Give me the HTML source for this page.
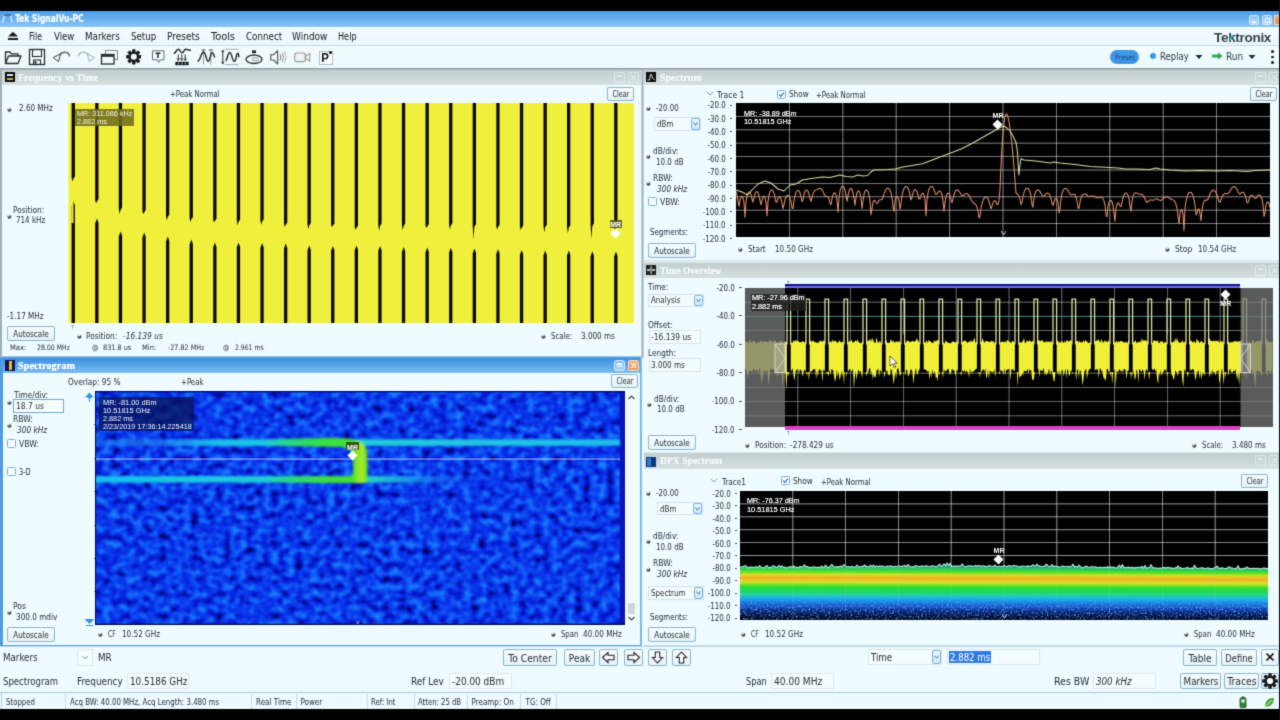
<!DOCTYPE html>
<html lang="en"><head><meta charset="utf-8"><title>Tek SignalVu-PC</title>
<style>
html,body{margin:0;padding:0;background:#000;}
body{width:1280px;height:720px;position:relative;overflow:hidden;font-family:"DejaVu Sans Condensed","Liberation Sans",sans-serif;}
.a{position:absolute;display:block;}
.t{position:absolute;white-space:nowrap;display:block;}
#app{position:absolute;left:0;top:0;width:1280px;height:720px;overflow:hidden;background:#000;filter:url(#softblur);}
</style></head>
<body><svg width="0" height="0" style="position:absolute"><defs><filter id="softblur" x="0" y="0" width="100%" height="100%" color-interpolation-filters="sRGB"><feConvolveMatrix order="3" kernelMatrix="0.04 0.19 0.04 0.19 1 0.19 0.04 0.19 0.04" divisor="1.92" edgeMode="duplicate" preserveAlpha="true"/></filter></defs></svg><div id="app">
<div class="a" style="left:0px;top:10.5px;width:1280px;height:698.5px;background:#eefbff;"></div>
<div class="a" style="left:0px;top:10.5px;width:1280px;height:16.5px;background:linear-gradient(#4f9ee9 0%,#64adef 45%,#8cc6f6 100%);"></div>
<svg class="a" style="left:2px;top:13px;" width="11" height="10" viewBox="0 0 11 10"><path d="M0.8 9.5 L2.5 2 L8.5 2 L10.2 9.5" stroke="#dfeffc" stroke-width="1.3" fill="none"/><path d="M2 2 L9 2" stroke="#2a5d9a" stroke-width="1.6"/></svg>
<span class="t" id="t1" style="top:12.25px;font-size:10.5px;line-height:13.7px;color:#f4fbff;left:15px;transform-origin:0 50%;transform:scaleX(0.8023);font-weight:bold;text-shadow:0 0 1px #cfe6fa;">Tek SignalVu-PC</span>
<div class="a" style="left:1249px;top:14.5px;width:10px;height:10px;background:linear-gradient(#8cc4f4,#b4d9f8);border:1px solid #cfe6fa;box-sizing:border-box;border-radius:2px;"><div class="a" style="left:2px;top:5px;width:4px;height:2px;background:#f4faff"></div></div>
<div class="a" style="left:1261.5px;top:14.5px;width:10px;height:10px;background:linear-gradient(#8cc4f4,#b4d9f8);border:1px solid #cfe6fa;box-sizing:border-box;border-radius:2px;"><div class="a" style="left:2px;top:2px;width:3px;height:3px;border:1px solid #f4faff"></div></div>
<div class="a" style="left:1274px;top:14.5px;width:6px;height:10px;background:linear-gradient(#f0b078,#e8904c);border:1px solid #f6d6b8;box-sizing:border-box;border-radius:2px 0 0 2px;border-right:0;"></div>
<div class="a" style="left:0px;top:27px;width:1280px;height:18.5px;background:linear-gradient(#f3fcff,#e9f7fd);"></div>
<div class="a" style="left:0px;top:45px;width:1280px;height:1px;background:#c3dbe8;"></div>
<svg class="a" style="left:7px;top:31px;" width="12" height="10" viewBox="0 0 12 10"><path d="M1 5.5 L6 0.8 L11 5.5 Z" fill="#1d1d1d"/><rect x="1" y="7" width="10" height="2" fill="#1d1d1d"/></svg>
<span class="t" id="t2" style="top:30.1px;font-size:10px;line-height:13.0px;color:#15181b;left:29px;transform-origin:0 50%;transform:scaleX(0.8667);">File</span>
<span class="t" id="t3" style="top:30.1px;font-size:10px;line-height:13.0px;color:#15181b;left:54px;transform-origin:0 50%;transform:scaleX(0.9524);">View</span>
<span class="t" id="t4" style="top:30.1px;font-size:10px;line-height:13.0px;color:#15181b;left:85px;transform-origin:0 50%;transform:scaleX(0.9722);">Markers</span>
<span class="t" id="t5" style="top:30.1px;font-size:10px;line-height:13.0px;color:#15181b;left:131px;transform-origin:0 50%;transform:scaleX(0.9615);">Setup</span>
<span class="t" id="t6" style="top:30.1px;font-size:10px;line-height:13.0px;color:#15181b;left:167px;transform-origin:0 50%;transform:scaleX(1.0000);">Presets</span>
<span class="t" id="t7" style="top:30.1px;font-size:10px;line-height:13.0px;color:#15181b;left:211px;transform-origin:0 50%;transform:scaleX(1.0909);">Tools</span>
<span class="t" id="t8" style="top:30.1px;font-size:10px;line-height:13.0px;color:#15181b;left:246px;transform-origin:0 50%;transform:scaleX(0.9730);">Connect</span>
<span class="t" id="t9" style="top:30.1px;font-size:10px;line-height:13.0px;color:#15181b;left:292px;transform-origin:0 50%;transform:scaleX(1.0000);">Window</span>
<span class="t" id="t10" style="top:30.1px;font-size:10px;line-height:13.0px;color:#15181b;left:338px;transform-origin:0 50%;transform:scaleX(0.9048);">Help</span>
<span class="t" id="t11" style="top:28.5px;font-size:13.5px;line-height:17.6px;color:#353f46;left:1214px;transform-origin:0 50%;transform:scaleX(1.0000);font-weight:bold;font-family:'Liberation Sans',sans-serif;letter-spacing:-0.3px;">Tektronix</span>
<svg class="a" style="left:1227px;top:33px;" width="9" height="9" viewBox="0 0 9 9"><path d="M2.4 7.6 L5.9 1.8" stroke="#35b6e2" stroke-width="1.5"/></svg>
<div class="a" style="left:0px;top:46px;width:1280px;height:22px;background:linear-gradient(#f2fcff,#ecf9fe);"></div>
<div class="a" style="left:0px;top:67.5px;width:1280px;height:2.2px;background:linear-gradient(#8e9a9c,#b0bcbc);"></div>
<svg class="a" style="left:4px;top:49px;" width="19" height="17" viewBox="0 0 19 17"><path d="M1.5 14.5 L1.5 3 L6 3 L7.5 4.8 L14 4.8 L14 7" stroke="#2b2b2b" stroke-width="1.3" fill="none" stroke-linejoin="round"/><path d="M1.5 14.5 L4.5 7 L17 7 L14 14.5 Z" stroke="#2b2b2b" stroke-width="1.3" fill="none" stroke-linejoin="round"/></svg>
<svg class="a" style="left:28px;top:48px;" width="19" height="19" viewBox="0 0 19 19"><rect x="1.5" y="1.5" width="15" height="15" stroke="#2b2b2b" stroke-width="1.3" fill="none"/><rect x="4.5" y="1.5" width="9" height="7" stroke="#2b2b2b" stroke-width="1.1" fill="none"/><rect x="5.5" y="12" width="7" height="4.5" stroke="#2b2b2b" stroke-width="1.1" fill="none"/><rect x="6.5" y="13.2" width="2" height="2.6" fill="#2b2b2b"/></svg>
<svg class="a" style="left:52px;top:50px;" width="20" height="14" viewBox="0 0 20 14"><path d="M17.7 6.2 C16.5 1.2 10 0.8 7 5.6" stroke="#666" stroke-width="1.5" fill="none"/><path d="M1.2 7.6 L8.6 3.8 L6.6 11.6 Z" stroke="#444" stroke-width="1" fill="#eef4f6" stroke-linejoin="round"/></svg>
<svg class="a" style="left:76px;top:50px;" width="20" height="14" viewBox="0 0 20 14"><path d="M2.3 6.2 C3.5 1.2 10 0.8 13 5.6" stroke="#b4bcc0" stroke-width="1.5" fill="none"/><path d="M18.8 7.6 L11.4 3.8 L13.4 11.6 Z" stroke="#aab2b6" stroke-width="1" fill="#eef4f6" stroke-linejoin="round"/></svg>
<svg class="a" style="left:100px;top:49px;" width="20" height="17" viewBox="0 0 20 17"><rect x="5.5" y="1.5" width="12" height="9" stroke="#888" stroke-width="1" fill="none"/><rect x="1.5" y="5.5" width="12.5" height="9.5" stroke="#2b2b2b" stroke-width="1.3" fill="#f2fcff"/><rect x="1.5" y="5.5" width="12.5" height="2.4" fill="#333"/></svg>
<svg class="a" style="left:125.8px;top:49.2px;" width="15.6" height="15.6" viewBox="0 0 17 17"><g transform="translate(8.5,8.5)"><rect x="-1.9" y="-8.3" width="3.8" height="4" rx="0.7" transform="rotate(0)" fill="#1a1a1a"/><rect x="-1.9" y="-8.3" width="3.8" height="4" rx="0.7" transform="rotate(45)" fill="#1a1a1a"/><rect x="-1.9" y="-8.3" width="3.8" height="4" rx="0.7" transform="rotate(90)" fill="#1a1a1a"/><rect x="-1.9" y="-8.3" width="3.8" height="4" rx="0.7" transform="rotate(135)" fill="#1a1a1a"/><rect x="-1.9" y="-8.3" width="3.8" height="4" rx="0.7" transform="rotate(180)" fill="#1a1a1a"/><rect x="-1.9" y="-8.3" width="3.8" height="4" rx="0.7" transform="rotate(225)" fill="#1a1a1a"/><rect x="-1.9" y="-8.3" width="3.8" height="4" rx="0.7" transform="rotate(270)" fill="#1a1a1a"/><rect x="-1.9" y="-8.3" width="3.8" height="4" rx="0.7" transform="rotate(315)" fill="#1a1a1a"/><circle r="5.7" fill="#1a1a1a"/><circle r="3.3" fill="#f2fcff"/></g></svg>
<svg class="a" style="left:151px;top:49px;" width="16" height="17" viewBox="0 0 16 17"><path d="M1.5 1.8 H13 V10.8 H9.3 L7.6 13.6 L6.6 10.8 H1.5 Z" stroke="#6a6a6a" stroke-width="1" fill="none"/><path d="M4.6 4.2 H9.4 M7 4.2 V9" stroke="#2b2b2b" stroke-width="1.5"/></svg>
<svg class="a" style="left:173px;top:48px;" width="19" height="18" viewBox="0 0 19 18"><path d="M0.8 5.6 C2.5 5.3 3.5 1.3 5.3 1.3 C7.2 1.3 7.4 5 9 5 C10.6 5 11 1.3 12.7 1.3 C14.6 1.3 15.6 2.6 18 2" stroke="#2b2b2b" stroke-width="1.5" fill="none"/><path d="M5.3 6.5 V12 M8.8 6.5 V12 M12.2 6.5 V12" stroke="#2b2b2b" stroke-width="1"/><path d="M4.1 10.5 L5.3 12.6 L6.5 10.5 M7.6 10.5 L8.8 12.6 L10 10.5 M11 10.5 L12.2 12.6 L13.4 10.5" stroke="#2b2b2b" stroke-width="0.9" fill="none"/><rect x="2.4" y="13.8" width="13.2" height="3.4" fill="#111"/><path d="M5.6 14.6 V16.4 M9 14.6 V16.4 M12.4 14.6 V16.4" stroke="#f2fcff" stroke-width="0.9"/></svg>
<svg class="a" style="left:196px;top:48px;" width="20" height="18" viewBox="0 0 20 18"><path d="M7.5 1.3 V16.6 M14.8 1.3 V16.6" stroke="#888" stroke-width="0.8"/><path d="M5.5 2 H9.5 M12.8 2 H16.8" stroke="#555" stroke-width="1.2"/><path d="M1.5 13.3 C4.5 13.3 5 4 7.5 4 C10 4 10 13.3 12.2 13.3 C14.2 13.3 14.5 4.6 16.1 4.6 C17.4 4.6 17.8 7.5 18.8 9.3" stroke="#2b2b2b" stroke-width="1.5" fill="none"/></svg>
<svg class="a" style="left:221px;top:48px;" width="19" height="18" viewBox="0 0 19 18"><path d="M3.5 1.3 H17.5 M3.5 16.6 H17.5" stroke="#999" stroke-width="0.8"/><path d="M1.8 2.5 V15.5" stroke="#2b2b2b" stroke-width="1"/><path d="M0.6 4.2 L1.8 2 L3 4.2 M0.6 13.8 L1.8 16 L3 13.8" stroke="#2b2b2b" stroke-width="0.9" fill="none"/><path d="M4.5 12.6 C6.5 12.6 6.5 4.6 8.7 4.6 C11 4.6 11 13.3 13.4 13.3 C15.4 13.3 15.2 5.3 16.7 5.3 C17.7 5.3 17.8 8 17.8 9.3" stroke="#2b2b2b" stroke-width="1.5" fill="none"/></svg>
<svg class="a" style="left:245px;top:48px;" width="19" height="18" viewBox="0 0 19 18"><ellipse cx="9" cy="11.3" rx="8" ry="4.2" stroke="#2b2b2b" stroke-width="1.3" fill="none"/><ellipse cx="10.3" cy="11.3" rx="3.2" ry="1.6" stroke="#777" stroke-width="0.8" fill="none"/><rect x="7" y="2.4" width="4" height="2.6" fill="#222"/><path d="M9 5 V8" stroke="#555" stroke-width="0.9"/></svg>
<svg class="a" style="left:269px;top:49px;" width="19" height="17" viewBox="0 0 19 17"><path d="M1.8 5.6 H4.6 L8.6 1.6 V15 L4.6 11 H1.8 Z" stroke="#5a5a5a" stroke-width="1.2" fill="#f4f8fa" stroke-linejoin="round"/><path d="M10.8 5.3 C12 6.8 12 9.8 10.8 11.3" stroke="#666" stroke-width="1" fill="none"/><path d="M12.8 3.8 C14.8 6.2 14.8 10.4 12.8 12.8" stroke="#888" stroke-width="1" fill="none"/><path d="M14.8 2.4 C17.6 5.6 17.6 11 14.8 14.2" stroke="#aaa" stroke-width="1" fill="none"/></svg>
<svg class="a" style="left:293px;top:50px;" width="19" height="15" viewBox="0 0 19 15"><rect x="1.8" y="3" width="10.4" height="8.6" rx="1.6" stroke="#999" stroke-width="1.2" fill="#f0f4f5"/><path d="M12.6 6 L16.8 3.6 V11 L12.6 8.6 Z" stroke="#999" stroke-width="1.1" fill="#f0f4f5"/></svg>
<div class="a" style="left:318.5px;top:50.5px;width:14.5px;height:14.5px;background:#fbfeff;border:1px solid #b4bec2;box-sizing:border-box;"></div>
<span class="t" id="t12" style="top:50.6px;font-size:12px;line-height:15.6px;color:#111;left:325.2px;transform-origin:50% 50%;transform:translateX(-50%) scaleX(0.9500);font-weight:bold;font-family:'Liberation Sans',sans-serif;">P</span>
<div class="a" style="left:329.4px;top:51px;width:2.8px;height:2.8px;background:#111;border-radius:2px;"></div>
<div class="a" style="left:1110px;top:50px;width:29px;height:14px;background:#3d97e6;border-radius:7px;"></div>
<span class="t" id="t13" style="top:52.6px;font-size:7.5px;line-height:9.8px;color:#1c4a7a;left:1124.5px;transform-origin:50% 50%;transform:translateX(-50%) scaleX(0.9500);">Preset</span>
<div class="a" style="left:1149.5px;top:52.5px;width:6px;height:6px;background:#3d97e6;border-radius:3px;"></div>
<span class="t" id="t14" style="top:50.45px;font-size:10.5px;line-height:13.7px;color:#2f3a42;left:1160px;transform-origin:0 50%;transform:scaleX(0.9062);">Replay</span>
<svg class="a" style="left:1195px;top:54px;" width="8" height="6" viewBox="0 0 8 6"><path d="M0.5 1 L7.5 1 L4 5 Z" fill="#222"/></svg>
<svg class="a" style="left:1212px;top:52px;" width="11" height="8" viewBox="0 0 11 8"><path d="M0 2.5 H6 V0.3 L10.5 4 L6 7.7 V5.5 H0 Z" fill="#2fae4a"/></svg>
<span class="t" id="t15" style="top:50.45px;font-size:10.5px;line-height:13.7px;color:#2f3a42;left:1226px;transform-origin:0 50%;transform:scaleX(0.9444);">Run</span>
<svg class="a" style="left:1248px;top:54px;" width="8" height="6" viewBox="0 0 8 6"><path d="M0.5 1 L7.5 1 L4 5 Z" fill="#222"/></svg>
<div class="a" style="left:1271px;top:50.0px;width:2.6px;height:2.6px;background:#1a1a1a;border-radius:2px;"></div>
<div class="a" style="left:1271px;top:55.5px;width:2.6px;height:2.6px;background:#1a1a1a;border-radius:2px;"></div>
<div class="a" style="left:1271px;top:61.0px;width:2.6px;height:2.6px;background:#1a1a1a;border-radius:2px;"></div>
<div class="a" style="left:640.5px;top:69.5px;width:3px;height:577px;background:linear-gradient(90deg,#d5e3e8,#9fb0b6 50%,#d5e3e8);"></div>
<div class="a" style="left:0px;top:69.5px;width:1.5px;height:577px;background:#9fb0b6;"></div>
<div class="a" style="left:1278.5px;top:69.5px;width:1.5px;height:577px;background:#b8cdd6;"></div>
<div class="a" style="left:1.5px;top:69.5px;width:639px;height:15.5px;background:linear-gradient(#c2cfcd 0%,#cad7d5 50%,#d5e2e1 100%);"></div>
<span class="t" id="t16" style="top:69.8px;font-size:11px;line-height:14.3px;color:#f3f9fa;left:17.8px;transform-origin:0 50%;transform:scaleX(0.8791);font-weight:bold;font-family:'Liberation Serif',serif;letter-spacing:0.1px;text-shadow:0 0 0.7px #fff;">Frequency vs Time</span>
<div class="a" style="left:614.0px;top:71.5px;width:11px;height:11px;border:1px solid rgba(232,242,242,0.7);box-sizing:border-box;border-radius:2px;"><div class="a" style="left:2px;top:2px;width:5px;height:2px;background:rgba(236,244,244,0.7)"></div></div>
<div class="a" style="left:628.0px;top:71.5px;width:11px;height:11px;border:1px solid rgba(232,242,242,0.7);box-sizing:border-box;border-radius:2px;"><svg width="9" height="9" viewBox="0 0 9 9" style="position:absolute;left:0;top:0"><path d="M2 2 L7 7 M7 2 L2 7" stroke="rgba(236,244,244,0.7)" stroke-width="1.2"/></svg></div>
<div class="a" style="left:5px;top:72px;width:10px;height:10px;background:#101010;"><div class="a" style="left:2px;top:2px;width:6px;height:2px;background:#e8e8e8"></div><div class="a" style="left:2px;top:6px;width:6px;height:1.5px;background:#b9b94a"></div></div>
<span class="t" id="t17" style="top:89.25px;font-size:8.5px;line-height:11.1px;color:#2a2f33;left:170px;transform-origin:0 50%;transform:scaleX(0.9091);">+Peak Normal</span>
<div class="a" style="left:607px;top:87px;width:27px;height:14px;background:linear-gradient(#f6fdff,#e3f1f6);border:1px solid #8fb4cc;box-sizing:border-box;border-radius:2px;"></div>
<span class="t" id="t18" style="top:89.25px;font-size:8.5px;line-height:11.1px;color:#2a2f33;left:620.5px;transform-origin:50% 50%;transform:translateX(-50%) scaleX(0.8500);">Clear</span>
<svg class="a" style="left:6px;top:105.5px;" width="7" height="7" viewBox="0 0 7 7"><circle cx="3.4" cy="3.8" r="2" fill="#4a4a4a"/><path d="M1.6 3.2 A2 2 0 0 1 4.6 2.2 L3.4 3.6 Z" fill="#e8eef0"/></svg>
<span class="t" id="t19" style="top:103.25px;font-size:8.5px;line-height:11.1px;color:#2a2f33;left:19px;transform-origin:0 50%;transform:scaleX(0.9444);">2.60 MHz</span>
<svg class="a" style="left:6px;top:213px;" width="7" height="7" viewBox="0 0 7 7"><circle cx="3.4" cy="3.8" r="2" fill="#4a4a4a"/><path d="M1.6 3.2 A2 2 0 0 1 4.6 2.2 L3.4 3.6 Z" fill="#e8eef0"/></svg>
<span class="t" id="t20" style="top:204.75px;font-size:8.5px;line-height:11.1px;color:#2a2f33;left:13px;transform-origin:0 50%;transform:scaleX(0.9688);">Position:</span>
<span class="t" id="t21" style="top:215.25px;font-size:8.5px;line-height:11.1px;color:#2a2f33;left:16px;transform-origin:0 50%;transform:scaleX(0.9355);">714 kHz</span>
<span class="t" id="t22" style="top:310.75px;font-size:8.5px;line-height:11.1px;color:#2a2f33;left:7px;transform-origin:0 50%;transform:scaleX(0.9487);">-1.17 MHz</span>
<div class="a" style="left:6.5px;top:326px;width:48px;height:14.5px;background:linear-gradient(#f6fdff,#e3f1f6);border:1px solid #8fb4cc;box-sizing:border-box;border-radius:2px;"></div>
<span class="t" id="t23" style="top:328.5px;font-size:8.5px;line-height:11.1px;color:#2a2f33;left:30.5px;transform-origin:50% 50%;transform:translateX(-50%) scaleX(0.9459);">Autoscale</span>
<svg class="a" style="left:75.5px;top:333px;" width="7" height="7" viewBox="0 0 7 7"><circle cx="3.4" cy="3.8" r="2" fill="#4a4a4a"/><path d="M1.6 3.2 A2 2 0 0 1 4.6 2.2 L3.4 3.6 Z" fill="#e8eef0"/></svg>
<span class="t" id="t24" style="top:331.25px;font-size:8.5px;line-height:11.1px;color:#2a2f33;left:86px;transform-origin:0 50%;transform:scaleX(0.9688);">Position:</span>
<span class="t" id="t25" style="top:331.25px;font-size:8.5px;line-height:11.1px;color:#2a2f33;left:123px;transform-origin:0 50%;transform:scaleX(0.9756);font-style:italic;">-16.139 us</span>
<svg class="a" style="left:540px;top:333px;" width="7" height="7" viewBox="0 0 7 7"><circle cx="3.4" cy="3.8" r="2" fill="#4a4a4a"/><path d="M1.6 3.2 A2 2 0 0 1 4.6 2.2 L3.4 3.6 Z" fill="#e8eef0"/></svg>
<span class="t" id="t26" style="top:331.25px;font-size:8.5px;line-height:11.1px;color:#2a2f33;left:551px;transform-origin:0 50%;transform:scaleX(0.9130);">Scale:</span>
<span class="t" id="t27" style="top:331.25px;font-size:8.5px;line-height:11.1px;color:#2a2f33;left:581px;transform-origin:0 50%;transform:scaleX(0.9444);">3.000 ms</span>
<span class="t" id="t28" style="top:342.9px;font-size:7.5px;line-height:9.8px;color:#2a2f33;left:10px;transform-origin:0 50%;transform:scaleX(1.0000);">Max:</span>
<span class="t" id="t29" style="top:342.9px;font-size:7.5px;line-height:9.8px;color:#2a2f33;left:37px;transform-origin:0 50%;transform:scaleX(0.9167);">28.00 MHz</span>
<span class="t" id="t30" style="top:342.9px;font-size:7.5px;line-height:9.8px;color:#2a2f33;left:92px;transform-origin:0 50%;transform:scaleX(0.9300);">@</span>
<span class="t" id="t31" style="top:342.9px;font-size:7.5px;line-height:9.8px;color:#2a2f33;left:103px;transform-origin:0 50%;transform:scaleX(0.9655);">831.8 us</span>
<span class="t" id="t32" style="top:342.9px;font-size:7.5px;line-height:9.8px;color:#2a2f33;left:142px;transform-origin:0 50%;transform:scaleX(1.0000);">Min:</span>
<span class="t" id="t33" style="top:342.9px;font-size:7.5px;line-height:9.8px;color:#2a2f33;left:168px;transform-origin:0 50%;transform:scaleX(0.9474);">-27.82 MHz</span>
<span class="t" id="t34" style="top:342.9px;font-size:7.5px;line-height:9.8px;color:#2a2f33;left:223px;transform-origin:0 50%;transform:scaleX(0.9300);">@</span>
<span class="t" id="t35" style="top:342.9px;font-size:7.5px;line-height:9.8px;color:#2a2f33;left:235px;transform-origin:0 50%;transform:scaleX(0.9062);">2.961 ms</span>
<svg class="a" style="left:68px;top:102.5px;" width="566" height="220.5" viewBox="0 0 566 220.5"><rect x="0" y="0" width="566" height="220.5" fill="#f0f03c"/><rect x="0" y="0" width="1.5" height="220.5" fill="#f3f370"/><path d="M3.6 0 H6.9 V73.5 L5.3 76.0 L4.5 78.6 L3.6 75.0 Z" fill="#0a0a00"/><path d="M3.6 220.5 H6.9 V102.5 L5.4 98.0 L3.6 103.0 Z" fill="#0a0a00"/><path d="M27.2 0 H30.5 V96.0 L28.9 98.5 L28.1 100.3 L27.2 97.5 Z" fill="#0a0a00"/><path d="M27.2 220.5 H30.5 V120.0 L29.0 115.5 L27.2 120.5 Z" fill="#0a0a00"/><path d="M50.8 0 H54.1 V104.5 L52.5 107.0 L51.7 111.3 L50.8 106.0 Z" fill="#0a0a00"/><path d="M50.8 220.5 H54.1 V133.0 L52.6 128.5 L50.8 133.5 Z" fill="#0a0a00"/><path d="M74.4 0 H77.7 V107.0 L76.1 109.5 L75.3 110.9 L74.4 108.5 Z" fill="#0a0a00"/><path d="M74.4 220.5 H77.7 V134.0 L76.2 129.5 L74.4 134.5 Z" fill="#0a0a00"/><path d="M98.0 0 H101.3 V111.5 L99.7 114.0 L98.9 117.7 L98.0 113.0 Z" fill="#0a0a00"/><path d="M98.0 220.5 H101.3 V138.0 L99.8 133.5 L98.0 138.5 Z" fill="#0a0a00"/><path d="M121.6 0 H124.9 V114.0 L123.2 116.5 L122.5 119.3 L121.6 115.5 Z" fill="#0a0a00"/><path d="M121.6 220.5 H124.9 V141.0 L123.3 136.5 L121.6 141.5 Z" fill="#0a0a00"/><path d="M145.2 0 H148.5 V115.5 L146.8 118.0 L146.1 119.3 L145.2 117.0 Z" fill="#0a0a00"/><path d="M145.2 220.5 H148.5 V144.0 L146.9 139.5 L145.2 144.5 Z" fill="#0a0a00"/><path d="M168.8 0 H172.1 V116.5 L170.4 119.0 L169.7 122.2 L168.8 118.0 Z" fill="#0a0a00"/><path d="M168.8 220.5 H172.1 V143.9 L170.5 139.4 L168.8 144.4 Z" fill="#0a0a00"/><path d="M192.4 0 H195.7 V116.2 L194.0 118.7 L193.3 121.8 L192.4 117.7 Z" fill="#0a0a00"/><path d="M192.4 220.5 H195.7 V144.5 L194.1 140.0 L192.4 145.0 Z" fill="#0a0a00"/><path d="M216.0 0 H219.3 V119.5 L217.6 122.0 L216.9 124.1 L216.0 121.0 Z" fill="#0a0a00"/><path d="M216.0 220.5 H219.3 V145.1 L217.7 140.6 L216.0 145.6 Z" fill="#0a0a00"/><path d="M239.5 0 H242.8 V119.9 L241.2 122.4 L240.4 126.3 L239.5 121.4 Z" fill="#0a0a00"/><path d="M239.5 220.5 H242.8 V146.9 L241.3 142.4 L239.5 147.4 Z" fill="#0a0a00"/><path d="M263.1 0 H266.4 V120.2 L264.8 122.7 L264.0 123.9 L263.1 121.7 Z" fill="#0a0a00"/><path d="M263.1 220.5 H266.4 V147.5 L264.9 143.0 L263.1 148.0 Z" fill="#0a0a00"/><path d="M286.7 0 H290.0 V122.6 L288.4 125.1 L287.6 126.8 L286.7 124.1 Z" fill="#0a0a00"/><path d="M286.7 220.5 H290.0 V147.1 L288.5 142.6 L286.7 147.6 Z" fill="#0a0a00"/><path d="M310.3 0 H313.6 V120.4 L312.0 122.9 L311.2 127.9 L310.3 121.9 Z" fill="#0a0a00"/><path d="M310.3 220.5 H313.6 V147.6 L312.1 143.1 L310.3 148.1 Z" fill="#0a0a00"/><path d="M333.9 0 H337.2 V120.5 L335.6 123.0 L334.8 127.2 L333.9 122.0 Z" fill="#0a0a00"/><path d="M333.9 220.5 H337.2 V148.6 L335.7 144.1 L333.9 149.1 Z" fill="#0a0a00"/><path d="M357.5 0 H360.8 V121.1 L359.2 123.6 L358.4 124.9 L357.5 122.6 Z" fill="#0a0a00"/><path d="M357.5 220.5 H360.8 V149.1 L359.3 144.6 L357.5 149.6 Z" fill="#0a0a00"/><path d="M381.1 0 H384.4 V120.2 L382.7 122.7 L382.0 127.1 L381.1 121.7 Z" fill="#0a0a00"/><path d="M381.1 220.5 H384.4 V149.2 L382.8 144.7 L381.1 149.7 Z" fill="#0a0a00"/><path d="M404.7 0 H408.0 V121.3 L406.3 123.8 L405.6 136.8 L404.7 122.8 Z" fill="#0a0a00"/><path d="M404.7 220.5 H408.0 V149.9 L406.4 145.4 L404.7 150.4 Z" fill="#0a0a00"/><path d="M428.3 0 H431.6 V121.8 L429.9 124.3 L429.2 126.8 L428.3 123.3 Z" fill="#0a0a00"/><path d="M428.3 220.5 H431.6 V150.6 L430.0 146.1 L428.3 151.1 Z" fill="#0a0a00"/><path d="M451.9 0 H455.2 V122.4 L453.5 124.9 L452.8 127.1 L451.9 123.9 Z" fill="#0a0a00"/><path d="M451.9 220.5 H455.2 V151.5 L453.6 147.0 L451.9 152.0 Z" fill="#0a0a00"/><path d="M475.5 0 H478.8 V121.7 L477.1 124.2 L476.4 129.6 L475.5 123.2 Z" fill="#0a0a00"/><path d="M475.5 220.5 H478.8 V151.9 L477.2 147.4 L475.5 152.4 Z" fill="#0a0a00"/><path d="M499.0 0 H502.3 V122.2 L500.7 124.7 L499.9 130.6 L499.0 123.7 Z" fill="#0a0a00"/><path d="M499.0 220.5 H502.3 V152.1 L500.8 147.6 L499.0 152.6 Z" fill="#0a0a00"/><path d="M522.6 0 H525.9 V120.4 L524.3 122.9 L523.5 135.9 L522.6 121.9 Z" fill="#0a0a00"/><path d="M522.6 220.5 H525.9 V152.8 L524.4 148.3 L522.6 153.3 Z" fill="#0a0a00"/><path d="M546.2 0 H549.5 V122.3 L547.9 124.8 L547.1 128.2 L546.2 123.8 Z" fill="#0a0a00"/><path d="M546.2 220.5 H549.5 V153.0 L548.0 148.5 L546.2 153.5 Z" fill="#0a0a00"/><rect x="3.5" y="80" width="2" height="40" fill="#f0f03c"/></svg>
<div class="a" style="left:75px;top:108.5px;width:58.5px;height:17.5px;background:rgba(110,108,30,0.88);"></div>
<span class="t" id="t36" style="top:108.9px;font-size:7.5px;line-height:9.8px;color:#f4f4e0;left:76.5px;transform-origin:0 50%;transform:scaleX(0.9649);font-family:'Liberation Sans',sans-serif;">MR: 311.086 kHz</span>
<span class="t" id="t37" style="top:117.4px;font-size:7.5px;line-height:9.8px;color:#f4f4e0;left:76.5px;transform-origin:0 50%;transform:scaleX(0.9677);font-family:'Liberation Sans',sans-serif;">2.882 ms</span>
<div class="a" style="left:609.5px;top:219.5px;width:12.5px;height:8px;background:rgba(90,90,40,0.9);"></div>
<span class="t" id="t38" style="top:220.25px;font-size:7px;line-height:9.1px;color:#fff;left:615.7px;transform-origin:50% 50%;transform:translateX(-50%) scaleX(1.0000);font-weight:bold;font-family:'Liberation Sans',sans-serif;">MR</span>
<svg class="a" style="left:610px;top:228px;" width="11" height="11" viewBox="0 0 11 11"><path d="M5.5 0.5 L10.5 5.5 L5.5 10.5 L0.5 5.5 Z" fill="#fff"/></svg>
<span class="t" id="t39" style="top:324.05px;font-size:5px;line-height:6.5px;color:#666;left:71px;transform-origin:0 50%;transform:scaleX(1.0000);">T</span>
<div class="a" style="left:0px;top:355.5px;width:641px;height:2.5px;background:linear-gradient(#b8d4ea,#3f92e0);"></div>
<div class="a" style="left:1.5px;top:358px;width:639px;height:14.5px;background:linear-gradient(#3b8fe0 0%,#5aa6ea 50%,#7fbdf1 100%);"></div>
<span class="t" id="t40" style="top:357.8px;font-size:11px;line-height:14.3px;color:#ffffff;left:17.8px;transform-origin:0 50%;transform:scaleX(0.9194);font-weight:bold;font-family:'Liberation Serif',serif;letter-spacing:0.1px;text-shadow:0 0 0.7px #fff;">Spectrogram</span>
<div class="a" style="left:614.0px;top:360px;width:11px;height:11px;background:linear-gradient(#7fbdf1,#a9d3f6);border:1px solid #d4e9fb;box-sizing:border-box;border-radius:2px;"><div class="a" style="left:2px;top:2px;width:5px;height:4px;border:1px solid #eef7ff;border-top-width:2px;box-sizing:border-box"></div></div>
<div class="a" style="left:628.0px;top:360px;width:11px;height:11px;background:linear-gradient(#f2b27a,#ea9450);border:1px solid #f8dcc2;box-sizing:border-box;border-radius:2px;"><svg width="9" height="9" viewBox="0 0 9 9" style="position:absolute;left:0;top:0"><path d="M2 2 L7 7 M7 2 L2 7" stroke="#fff3e6" stroke-width="1.4"/></svg></div>
<div class="a" style="left:5px;top:359.5px;width:10px;height:11px;background:#14145a;"><div class="a" style="left:3.5px;top:1px;width:3px;height:9px;background:#d6c832"></div></div>
<div class="a" style="left:0px;top:358px;width:2.5px;height:288px;background:#4f9be4;"></div>
<div class="a" style="left:0px;top:644.5px;width:642px;height:2px;background:#5aa3e8;"></div>
<div class="a" style="left:639.8px;top:357.5px;width:3.8px;height:288px;background:linear-gradient(90deg,#6eb0ea 0,#8cc2f0 58%,#eefbff 62%);"></div>
<span class="t" id="t41" style="top:377.25px;font-size:8.5px;line-height:11.1px;color:#2a2f33;left:68px;transform-origin:0 50%;transform:scaleX(0.9636);">Overlap: 95 %</span>
<span class="t" id="t42" style="top:377.25px;font-size:8.5px;line-height:11.1px;color:#2a2f33;left:181px;transform-origin:0 50%;transform:scaleX(0.9200);">+Peak</span>
<div class="a" style="left:611px;top:374px;width:27px;height:13.5px;background:linear-gradient(#f6fdff,#e3f1f6);border:1px solid #8fb4cc;box-sizing:border-box;border-radius:2px;"></div>
<span class="t" id="t43" style="top:376.0px;font-size:8.5px;line-height:11.1px;color:#2a2f33;left:624.5px;transform-origin:50% 50%;transform:translateX(-50%) scaleX(0.8500);">Clear</span>
<span class="t" id="t44" style="top:389.95px;font-size:8.5px;line-height:11.1px;color:#2a2f33;left:14px;transform-origin:0 50%;transform:scaleX(0.9714);">Time/div:</span>
<svg class="a" style="left:6px;top:399px;" width="7" height="7" viewBox="0 0 7 7"><circle cx="3.4" cy="3.8" r="2" fill="#4a4a4a"/><path d="M1.6 3.2 A2 2 0 0 1 4.6 2.2 L3.4 3.6 Z" fill="#e8eef0"/></svg>
<div class="a" style="left:13px;top:399px;width:51px;height:13.5px;background:#f6fdff;border:1px solid #6ea6cf;box-sizing:border-box;"></div>
<span class="t" id="t45" style="top:400.95px;font-size:9px;line-height:11.7px;color:#2a2f33;left:16px;transform-origin:0 50%;transform:scaleX(0.9333);">18.7 us</span>
<span class="t" id="t46" style="top:413.95px;font-size:8.5px;line-height:11.1px;color:#2a2f33;left:13px;transform-origin:0 50%;transform:scaleX(1.0000);">RBW:</span>
<svg class="a" style="left:6px;top:422px;" width="7" height="7" viewBox="0 0 7 7"><circle cx="3.4" cy="3.8" r="2" fill="#4a4a4a"/><path d="M1.6 3.2 A2 2 0 0 1 4.6 2.2 L3.4 3.6 Z" fill="#e8eef0"/></svg>
<span class="t" id="t47" style="top:425.25px;font-size:8.5px;line-height:11.1px;color:#2a2f33;left:17px;transform-origin:0 50%;transform:scaleX(0.9677);font-style:italic;">300 kHz</span>
<div class="a" style="left:7px;top:438.5px;width:9px;height:9px;background:#f4fcff;border:1px solid #7fb0cf;box-sizing:border-box;border-radius:1.5px;"></div>
<span class="t" id="t48" style="top:438.75px;font-size:8.5px;line-height:11.1px;color:#2a2f33;left:19px;transform-origin:0 50%;transform:scaleX(1.0000);">VBW:</span>
<div class="a" style="left:7px;top:467px;width:9px;height:9px;background:#f4fcff;border:1px solid #7fb0cf;box-sizing:border-box;border-radius:1.5px;"></div>
<span class="t" id="t49" style="top:467.25px;font-size:8.5px;line-height:11.1px;color:#2a2f33;left:19px;transform-origin:0 50%;transform:scaleX(0.8571);">3-D</span>
<span class="t" id="t50" style="top:600.75px;font-size:8.5px;line-height:11.1px;color:#2a2f33;left:13px;transform-origin:0 50%;transform:scaleX(1.0000);">Pos</span>
<svg class="a" style="left:6px;top:608.5px;" width="7" height="7" viewBox="0 0 7 7"><circle cx="3.4" cy="3.8" r="2" fill="#4a4a4a"/><path d="M1.6 3.2 A2 2 0 0 1 4.6 2.2 L3.4 3.6 Z" fill="#e8eef0"/></svg>
<span class="t" id="t51" style="top:611.75px;font-size:8.5px;line-height:11.1px;color:#2a2f33;left:16px;transform-origin:0 50%;transform:scaleX(0.9535);">300.0 mdiv</span>
<div class="a" style="left:6.5px;top:627px;width:48px;height:14.5px;background:linear-gradient(#f6fdff,#e3f1f6);border:1px solid #8fb4cc;box-sizing:border-box;border-radius:2px;"></div>
<span class="t" id="t52" style="top:629.5px;font-size:8.5px;line-height:11.1px;color:#2a2f33;left:30.5px;transform-origin:50% 50%;transform:translateX(-50%) scaleX(0.9459);">Autoscale</span>
<svg class="a" style="left:97px;top:631px;" width="7" height="7" viewBox="0 0 7 7"><circle cx="3.4" cy="3.8" r="2" fill="#4a4a4a"/><path d="M1.6 3.2 A2 2 0 0 1 4.6 2.2 L3.4 3.6 Z" fill="#e8eef0"/></svg>
<span class="t" id="t53" style="top:629.25px;font-size:8.5px;line-height:11.1px;color:#2a2f33;left:108px;transform-origin:0 50%;transform:scaleX(0.8000);">CF</span>
<span class="t" id="t54" style="top:629.25px;font-size:8.5px;line-height:11.1px;color:#2a2f33;left:122px;transform-origin:0 50%;transform:scaleX(0.9500);">10.52 GHz</span>
<svg class="a" style="left:550px;top:631px;" width="7" height="7" viewBox="0 0 7 7"><circle cx="3.4" cy="3.8" r="2" fill="#4a4a4a"/><path d="M1.6 3.2 A2 2 0 0 1 4.6 2.2 L3.4 3.6 Z" fill="#e8eef0"/></svg>
<span class="t" id="t55" style="top:629.25px;font-size:8.5px;line-height:11.1px;color:#2a2f33;left:561px;transform-origin:0 50%;transform:scaleX(0.8947);">Span</span>
<span class="t" id="t56" style="top:629.25px;font-size:8.5px;line-height:11.1px;color:#2a2f33;left:583px;transform-origin:0 50%;transform:scaleX(0.9512);">40.00 MHz</span>
<svg class="a" style="left:95px;top:391px;" width="530" height="234" viewBox="0 0 530 234"><defs>
<filter id="sgn" x="0" y="0" width="100%" height="100%" color-interpolation-filters="sRGB">
<feTurbulence type="fractalNoise" baseFrequency="0.125 0.14" numOctaves="2" seed="11" result="n"/>
<feColorMatrix in="n" type="matrix" values="1.55 0 0 0 -0.255  1.55 0 0 0 -0.255  1.55 0 0 0 -0.255  0 0 0 0 1" result="g"/>
<feComponentTransfer in="g">
<feFuncR type="table" tableValues="0.00 0.00 0.02 0.03 0.04 0.05 0.07 0.09 0.10"/>
<feFuncG type="table" tableValues="0.00 0.03 0.09 0.15 0.21 0.29 0.38 0.46 0.52"/>
<feFuncB type="table" tableValues="0.20 0.55 0.80 0.88 0.92 0.95 0.97 0.98 0.98"/>
</feComponentTransfer>
<feGaussianBlur stdDeviation="0.9"/>
</filter>
<linearGradient id="up" x1="0" x2="1" y1="0" y2="0"><stop offset="0" stop-color="#2a9cf4" stop-opacity="0.35"/><stop offset="0.13" stop-color="#2aa4f4" stop-opacity="0.55"/><stop offset="0.22" stop-color="#1cc0ec" stop-opacity="0.95"/><stop offset="0.3" stop-color="#1cc8e4"/><stop offset="0.52" stop-color="#22ccdc"/><stop offset="1" stop-color="#20bcf0"/></linearGradient>
<linearGradient id="lo" x1="0" x2="1" y1="0" y2="0"><stop offset="0" stop-color="#18c0f0"/><stop offset="0.3" stop-color="#1cccdc"/><stop offset="0.53" stop-color="#22d0c8"/><stop offset="0.6" stop-color="#1fa8ee" stop-opacity="0.85"/><stop offset="0.72" stop-color="#1f7af0" stop-opacity="0"/></linearGradient>
<linearGradient id="vg" gradientUnits="userSpaceOnUse" x1="140" x2="272.5" y1="0" y2="0"><stop offset="0.2" stop-color="#28dc70" stop-opacity="0"/><stop offset="0.45" stop-color="#2cde58" stop-opacity="0.75"/><stop offset="0.66" stop-color="#38e040"/><stop offset="0.89" stop-color="#48e034"/><stop offset="0.935" stop-color="#98e828"/><stop offset="0.965" stop-color="#a8ea26"/><stop offset="1" stop-color="#4ce030"/></linearGradient>
<filter id="bl"><feGaussianBlur stdDeviation="0.9"/></filter>
</defs>
<rect width="530" height="234" fill="#0a1fc0"/>
<rect width="525" height="234" filter="url(#sgn)"/>
<rect x="525" y="0" width="5" height="234" fill="#0a14b8"/>
<rect x="0" y="67.6" width="525" height="0.9" fill="#e6e0f8" opacity="0.85"/>
<g filter="url(#bl)">
<rect x="0" y="48.3" width="525" height="6.6" fill="url(#up)"/>
<rect x="0" y="85" width="525" height="6.6" fill="url(#lo)"/>
<path d="M150 48 L235 47 Q258 46.5 266 51 Q272.5 55 272.5 66 V92 H140 V85 H254 Q258 85 258 80 V68 Q258 56.5 246 56 L150 55 Z" fill="url(#vg)"/>
</g>
<rect x="0" y="0" width="530" height="1.2" fill="#000a50"/>
<rect x="0" y="232.8" width="530" height="1.2" fill="#000a50"/>
<rect x="0" y="0" width="1" height="234" fill="#000a50"/>
</svg>
<div class="a" style="left:99px;top:396.5px;width:95px;height:34px;background:rgba(8,18,80,0.72);"></div>
<span class="t" id="t57" style="top:397.7px;font-size:7.5px;line-height:9.8px;color:#f2f6ff;left:102.5px;transform-origin:0 50%;transform:scaleX(0.9818);font-family:'Liberation Sans',sans-serif;">MR: -81.00 dBm</span>
<span class="t" id="t58" style="top:405.7px;font-size:7.5px;line-height:9.8px;color:#f2f6ff;left:102.5px;transform-origin:0 50%;transform:scaleX(0.9792);font-family:'Liberation Sans',sans-serif;">10.51815 GHz</span>
<span class="t" id="t59" style="top:413.7px;font-size:7.5px;line-height:9.8px;color:#f2f6ff;left:102.5px;transform-origin:0 50%;transform:scaleX(0.9677);font-family:'Liberation Sans',sans-serif;">2.882 ms</span>
<span class="t" id="t60" style="top:421.7px;font-size:7.5px;line-height:9.8px;color:#f2f6ff;left:102.5px;transform-origin:0 50%;transform:scaleX(0.9674);font-family:'Liberation Sans',sans-serif;">2/23/2019 17:36:14.225418</span>
<div class="a" style="left:346px;top:442px;width:13px;height:8px;background:rgba(44,72,22,0.9);"></div>
<span class="t" id="t61" style="top:442.55px;font-size:7px;line-height:9.1px;color:#fff;left:352.5px;transform-origin:50% 50%;transform:translateX(-50%) scaleX(1.0000);font-weight:bold;font-family:'Liberation Sans',sans-serif;">MR</span>
<svg class="a" style="left:347px;top:449.5px;" width="11" height="11" viewBox="0 0 11 11"><path d="M5.5 0.5 L10.5 5.5 L5.5 10.5 L0.5 5.5 Z" fill="#fff"/></svg>
<span class="t" id="t62" style="top:618.4px;font-size:6px;line-height:7.8px;color:#dde;left:358px;transform-origin:50% 50%;transform:translateX(-50%) scaleX(1.0000);">v</span>
<svg class="a" style="left:84px;top:392px;" width="11" height="10" viewBox="0 0 11 10"><path d="M5.5 0.5 L10 5.5 H7 V6.5 H4 V5.5 H1 Z" fill="#3a8fe0"/><path d="M5.5 6 V10" stroke="#3a8fe0" stroke-width="1"/></svg>
<svg class="a" style="left:84px;top:617.5px;" width="11" height="8" viewBox="0 0 11 8"><path d="M0.5 1 H10.5 L5.5 6 Z" fill="#3a8fe0"/><path d="M2 7.5 H9" stroke="#3a8fe0" stroke-width="1"/></svg>
<svg class="a" style="left:626px;top:391px;" width="11" height="234" viewBox="0 0 11 234"><path d="M2.5 8 L5.5 5 L8.5 8" stroke="#444" stroke-width="1.1" fill="none"/><path d="M2.5 226 L5.5 229 L8.5 226" stroke="#444" stroke-width="1.1" fill="none"/><rect x="2" y="212" width="7" height="11" fill="#cfd6d8"/></svg>
<div class="a" style="left:93.5px;top:424.4px;width:1.5px;height:1px;background:#667;"></div>
<div class="a" style="left:93.5px;top:457.8px;width:1.5px;height:1px;background:#667;"></div>
<div class="a" style="left:93.5px;top:491.2px;width:1.5px;height:1px;background:#667;"></div>
<div class="a" style="left:93.5px;top:524.6px;width:1.5px;height:1px;background:#667;"></div>
<div class="a" style="left:93.5px;top:558.0px;width:1.5px;height:1px;background:#667;"></div>
<div class="a" style="left:93.5px;top:591.4px;width:1.5px;height:1px;background:#667;"></div>
<div class="a" style="left:643.5px;top:69.5px;width:635.0px;height:15.5px;background:linear-gradient(#c2cfcd 0%,#cad7d5 50%,#d5e2e1 100%);"></div>
<span class="t" id="t63" style="top:69.8px;font-size:11px;line-height:14.3px;color:#f3f9fa;left:659.8px;transform-origin:0 50%;transform:scaleX(0.8936);font-weight:bold;font-family:'Liberation Serif',serif;letter-spacing:0.1px;text-shadow:0 0 0.7px #fff;">Spectrum</span>
<div class="a" style="left:1254.7px;top:71.5px;width:11px;height:11px;border:1px solid rgba(232,242,242,0.7);box-sizing:border-box;border-radius:2px;"><div class="a" style="left:2px;top:2px;width:5px;height:2px;background:rgba(236,244,244,0.7)"></div></div>
<div class="a" style="left:1268.7px;top:71.5px;width:11px;height:11px;border:1px solid rgba(232,242,242,0.7);box-sizing:border-box;border-radius:2px;"><svg width="9" height="9" viewBox="0 0 9 9" style="position:absolute;left:0;top:0"><path d="M2 2 L7 7 M7 2 L2 7" stroke="rgba(236,244,244,0.7)" stroke-width="1.2"/></svg></div>
<div class="a" style="left:646px;top:72px;width:10px;height:10px;background:#101010;"><svg width="10" height="10" viewBox="0 0 10 10" style="position:absolute;left:0;top:0"><path d="M1.5 8 H3.5 L4.5 2.5 H5.5 L6.5 6 L8.5 8" stroke="#eee" stroke-width="0.9" fill="none"/></svg></div>
<svg class="a" style="left:706px;top:91px;" width="8" height="5" viewBox="0 0 8 5"><path d="M0.8 0.8 L4 4 L7.2 0.8" stroke="#8a9498" stroke-width="1" fill="none"/></svg>
<span class="t" id="t64" style="top:89.75px;font-size:8.5px;line-height:11.1px;color:#2a2f33;left:717px;transform-origin:0 50%;transform:scaleX(1.0000);">Trace 1</span>
<div class="a" style="left:777px;top:89.5px;width:9px;height:9px;background:#f4fcff;border:1px solid #7fb0cf;box-sizing:border-box;border-radius:1.5px;"><svg width="9" height="9" viewBox="0 0 9 9" style="position:absolute;left:-1px;top:-1px"><path d="M2 4.6 L3.8 6.4 L7 2.6" stroke="#2b6ea8" stroke-width="1.1" fill="none"/></svg></div>
<span class="t" id="t65" style="top:89.25px;font-size:8.5px;line-height:11.1px;color:#2a2f33;left:788.5px;transform-origin:0 50%;transform:scaleX(0.9524);">Show</span>
<span class="t" id="t66" style="top:89.75px;font-size:8.5px;line-height:11.1px;color:#2a2f33;left:816px;transform-origin:0 50%;transform:scaleX(0.9091);">+Peak Normal</span>
<div class="a" style="left:1250px;top:87px;width:27px;height:14px;background:linear-gradient(#f6fdff,#e3f1f6);border:1px solid #8fb4cc;box-sizing:border-box;border-radius:2px;"></div>
<span class="t" id="t67" style="top:89.25px;font-size:8.5px;line-height:11.1px;color:#2a2f33;left:1263.5px;transform-origin:50% 50%;transform:translateX(-50%) scaleX(0.8500);">Clear</span>
<svg class="a" style="left:645px;top:104.5px;" width="7" height="7" viewBox="0 0 7 7"><circle cx="3.4" cy="3.8" r="2" fill="#4a4a4a"/><path d="M1.6 3.2 A2 2 0 0 1 4.6 2.2 L3.4 3.6 Z" fill="#e8eef0"/></svg>
<span class="t" id="t68" style="top:102.75px;font-size:8.5px;line-height:11.1px;color:#2a2f33;left:656px;transform-origin:0 50%;transform:scaleX(0.9200);">-20.00</span>
<div class="a" style="left:654px;top:117px;width:47px;height:13.5px;background:#f2fcff;border:1px solid #d3e3ea;box-sizing:border-box;"></div>
<div class="a" style="left:691px;top:118px;width:9px;height:11.5px;background:linear-gradient(#eaf6fd,#cfe6f4);border:1px solid #7fb4d8;box-sizing:border-box;border-radius:2px;"><svg width="7" height="9.5" viewBox="0 0 7 9.5" style="position:absolute;left:0;top:0"><path d="M1.5 3.25 L3.5 6.25 L5.5 3.25" stroke="#3b7fb5" stroke-width="1" fill="none"/></svg></div>
<span class="t" id="t69" style="top:119.0px;font-size:8.5px;line-height:11.1px;color:#2a2f33;left:657px;transform-origin:0 50%;transform:scaleX(0.9300);">dBm</span>
<svg class="a" style="left:645px;top:152.5px;" width="7" height="7" viewBox="0 0 7 7"><circle cx="3.4" cy="3.8" r="2" fill="#4a4a4a"/><path d="M1.6 3.2 A2 2 0 0 1 4.6 2.2 L3.4 3.6 Z" fill="#e8eef0"/></svg>
<span class="t" id="t70" style="top:145.75px;font-size:8.5px;line-height:11.1px;color:#2a2f33;left:653px;transform-origin:0 50%;transform:scaleX(0.9615);">dB/div:</span>
<span class="t" id="t71" style="top:156.75px;font-size:8.5px;line-height:11.1px;color:#2a2f33;left:656px;transform-origin:0 50%;transform:scaleX(0.9333);">10.0 dB</span>
<svg class="a" style="left:645px;top:180px;" width="7" height="7" viewBox="0 0 7 7"><circle cx="3.4" cy="3.8" r="2" fill="#4a4a4a"/><path d="M1.6 3.2 A2 2 0 0 1 4.6 2.2 L3.4 3.6 Z" fill="#e8eef0"/></svg>
<span class="t" id="t72" style="top:172.75px;font-size:8.5px;line-height:11.1px;color:#2a2f33;left:653px;transform-origin:0 50%;transform:scaleX(1.0000);">RBW:</span>
<span class="t" id="t73" style="top:183.75px;font-size:8.5px;line-height:11.1px;color:#2a2f33;left:657px;transform-origin:0 50%;transform:scaleX(0.9677);font-style:italic;">300 kHz</span>
<div class="a" style="left:647.8px;top:196.5px;width:9px;height:9px;background:#f4fcff;border:1px solid #7fb0cf;box-sizing:border-box;border-radius:1.5px;"></div>
<span class="t" id="t74" style="top:196.75px;font-size:8.5px;line-height:11.1px;color:#2a2f33;left:660px;transform-origin:0 50%;transform:scaleX(1.0000);">VBW:</span>
<span class="t" id="t75" style="top:227.25px;font-size:8.5px;line-height:11.1px;color:#2a2f33;left:650px;transform-origin:0 50%;transform:scaleX(0.9268);">Segments:</span>
<div class="a" style="left:647.5px;top:243px;width:48px;height:14.5px;background:linear-gradient(#f6fdff,#e3f1f6);border:1px solid #8fb4cc;box-sizing:border-box;border-radius:2px;"></div>
<span class="t" id="t76" style="top:245.5px;font-size:8.5px;line-height:11.1px;color:#2a2f33;left:671.5px;transform-origin:50% 50%;transform:translateX(-50%) scaleX(0.9459);">Autoscale</span>
<svg class="a" style="left:737px;top:246px;" width="7" height="7" viewBox="0 0 7 7"><circle cx="3.4" cy="3.8" r="2" fill="#4a4a4a"/><path d="M1.6 3.2 A2 2 0 0 1 4.6 2.2 L3.4 3.6 Z" fill="#e8eef0"/></svg>
<span class="t" id="t77" style="top:244.25px;font-size:8.5px;line-height:11.1px;color:#2a2f33;left:748px;transform-origin:0 50%;transform:scaleX(0.9474);">Start</span>
<span class="t" id="t78" style="top:244.25px;font-size:8.5px;line-height:11.1px;color:#2a2f33;left:775px;transform-origin:0 50%;transform:scaleX(0.9500);">10.50 GHz</span>
<svg class="a" style="left:1164px;top:246px;" width="7" height="7" viewBox="0 0 7 7"><circle cx="3.4" cy="3.8" r="2" fill="#4a4a4a"/><path d="M1.6 3.2 A2 2 0 0 1 4.6 2.2 L3.4 3.6 Z" fill="#e8eef0"/></svg>
<span class="t" id="t79" style="top:244.25px;font-size:8.5px;line-height:11.1px;color:#2a2f33;left:1175px;transform-origin:0 50%;transform:scaleX(1.0000);">Stop</span>
<span class="t" id="t80" style="top:244.25px;font-size:8.5px;line-height:11.1px;color:#2a2f33;left:1198px;transform-origin:0 50%;transform:scaleX(0.9500);">10.54 GHz</span>
<span class="t" id="t81" style="top:100.25px;font-size:8.5px;line-height:11.1px;color:#2a2f33;right:554.5px;transform-origin:100% 50%;transform:scaleX(0.9300);">-20.0</span>
<div class="a" style="left:729.5px;top:104.5px;width:2.5px;height:1px;background:#556;"></div>
<span class="t" id="t82" style="top:113.6px;font-size:8.5px;line-height:11.1px;color:#2a2f33;right:554.5px;transform-origin:100% 50%;transform:scaleX(0.9300);">-30.0</span>
<div class="a" style="left:729.5px;top:117.85px;width:2.5px;height:1px;background:#556;"></div>
<span class="t" id="t83" style="top:126.95px;font-size:8.5px;line-height:11.1px;color:#2a2f33;right:554.5px;transform-origin:100% 50%;transform:scaleX(0.9300);">-40.0</span>
<div class="a" style="left:729.5px;top:131.2px;width:2.5px;height:1px;background:#556;"></div>
<span class="t" id="t84" style="top:140.3px;font-size:8.5px;line-height:11.1px;color:#2a2f33;right:554.5px;transform-origin:100% 50%;transform:scaleX(0.9300);">-50.0</span>
<div class="a" style="left:729.5px;top:144.55px;width:2.5px;height:1px;background:#556;"></div>
<span class="t" id="t85" style="top:153.65px;font-size:8.5px;line-height:11.1px;color:#2a2f33;right:554.5px;transform-origin:100% 50%;transform:scaleX(0.9300);">-60.0</span>
<div class="a" style="left:729.5px;top:157.9px;width:2.5px;height:1px;background:#556;"></div>
<span class="t" id="t86" style="top:167.0px;font-size:8.5px;line-height:11.1px;color:#2a2f33;right:554.5px;transform-origin:100% 50%;transform:scaleX(0.9300);">-70.0</span>
<div class="a" style="left:729.5px;top:171.25px;width:2.5px;height:1px;background:#556;"></div>
<span class="t" id="t87" style="top:180.35px;font-size:8.5px;line-height:11.1px;color:#2a2f33;right:554.5px;transform-origin:100% 50%;transform:scaleX(0.9300);">-80.0</span>
<div class="a" style="left:729.5px;top:184.6px;width:2.5px;height:1px;background:#556;"></div>
<span class="t" id="t88" style="top:193.7px;font-size:8.5px;line-height:11.1px;color:#2a2f33;right:554.5px;transform-origin:100% 50%;transform:scaleX(0.9300);">-90.0</span>
<div class="a" style="left:729.5px;top:197.95px;width:2.5px;height:1px;background:#556;"></div>
<span class="t" id="t89" style="top:207.05px;font-size:8.5px;line-height:11.1px;color:#2a2f33;right:554.5px;transform-origin:100% 50%;transform:scaleX(0.9300);">-100.0</span>
<div class="a" style="left:729.5px;top:211.3px;width:2.5px;height:1px;background:#556;"></div>
<span class="t" id="t90" style="top:220.4px;font-size:8.5px;line-height:11.1px;color:#2a2f33;right:554.5px;transform-origin:100% 50%;transform:scaleX(0.9300);">-110.0</span>
<div class="a" style="left:729.5px;top:224.64999999999998px;width:2.5px;height:1px;background:#556;"></div>
<span class="t" id="t91" style="top:233.75px;font-size:8.5px;line-height:11.1px;color:#2a2f33;right:554.5px;transform-origin:100% 50%;transform:scaleX(0.9300);">-120.0</span>
<div class="a" style="left:729.5px;top:238.0px;width:2.5px;height:1px;background:#556;"></div>
<svg class="a" style="left:736px;top:103px;" width="534" height="134" viewBox="0 0 534 134"><rect width="534" height="134" fill="#000"/><path d="M53.4 0 V134" stroke="#d4d4d4" stroke-width="0.8" opacity="0.8"/><path d="M106.8 0 V134" stroke="#d4d4d4" stroke-width="0.8" opacity="0.8"/><path d="M160.2 0 V134" stroke="#d4d4d4" stroke-width="0.8" opacity="0.8"/><path d="M213.6 0 V134" stroke="#d4d4d4" stroke-width="0.8" opacity="0.8"/><path d="M267.0 0 V134" stroke="#d4d4d4" stroke-width="0.8" opacity="0.8"/><path d="M320.4 0 V134" stroke="#d4d4d4" stroke-width="0.8" opacity="0.8"/><path d="M373.8 0 V134" stroke="#d4d4d4" stroke-width="0.8" opacity="0.8"/><path d="M427.2 0 V134" stroke="#d4d4d4" stroke-width="0.8" opacity="0.8"/><path d="M480.6 0 V134" stroke="#d4d4d4" stroke-width="0.8" opacity="0.8"/><path d="M0 13.4 H534" stroke="#d4d4d4" stroke-width="0.8" opacity="0.8"/><path d="M0 26.8 H534" stroke="#d4d4d4" stroke-width="0.8" opacity="0.8"/><path d="M0 40.2 H534" stroke="#d4d4d4" stroke-width="0.8" opacity="0.8"/><path d="M0 53.6 H534" stroke="#d4d4d4" stroke-width="0.8" opacity="0.8"/><path d="M0 67.0 H534" stroke="#d4d4d4" stroke-width="0.8" opacity="0.8"/><path d="M0 80.4 H534" stroke="#d4d4d4" stroke-width="0.8" opacity="0.8"/><path d="M0 93.8 H534" stroke="#d4d4d4" stroke-width="0.8" opacity="0.8"/><path d="M0 107.2 H534" stroke="#d4d4d4" stroke-width="0.8" opacity="0.8"/><path d="M0 120.6 H534" stroke="#d4d4d4" stroke-width="0.8" opacity="0.8"/><path d="M0.0 88.5 L1.0 91.8 L2.0 97.9 L3.0 103.4 L4.0 97.4 L5.0 93.8 L6.0 93.0 L7.0 94.6 L8.0 99.7 L9.0 114.2 L10.0 99.3 L11.0 92.9 L12.0 90.0 L13.0 89.0 L14.0 89.5 L15.0 91.8 L16.0 96.0 L17.0 99.1 L18.0 94.8 L19.0 90.9 L20.0 89.0 L21.0 88.6 L22.0 89.7 L23.0 92.6 L24.0 97.7 L25.0 101.8 L26.0 97.3 L27.0 93.9 L28.0 93.0 L29.0 94.4 L30.0 99.2 L31.0 112.9 L32.0 98.8 L33.0 92.1 L34.0 88.7 L35.0 87.2 L36.0 86.9 L37.0 87.9 L38.0 90.2 L39.0 94.1 L40.0 99.2 L41.0 99.1 L42.0 95.6 L43.0 93.8 L44.0 93.8 L45.0 95.7 L46.0 99.9 L47.0 105.7 L48.0 101.7 L49.0 96.6 L50.0 93.8 L51.0 92.6 L52.0 92.4 L53.0 93.3 L54.0 95.2 L55.0 98.7 L56.0 105.1 L57.0 105.4 L58.0 97.4 L59.0 92.5 L60.0 89.6 L61.0 87.9 L62.0 87.4 L63.0 87.9 L64.0 89.8 L65.0 93.5 L66.0 98.7 L67.0 96.8 L68.0 91.6 L69.0 88.5 L70.0 87.1 L71.0 87.0 L72.0 88.2 L73.0 90.9 L74.0 95.4 L75.0 98.5 L76.0 94.5 L77.0 90.8 L78.0 88.6 L79.0 87.5 L80.0 86.9 L81.0 86.4 L82.0 85.9 L83.0 85.5 L84.0 85.3 L85.0 85.6 L86.0 86.7 L87.0 88.4 L88.0 90.8 L89.0 92.9 L90.0 93.6 L91.0 93.4 L92.0 93.8 L93.0 95.9 L94.0 100.3 L95.0 101.6 L96.0 95.7 L97.0 91.7 L98.0 89.9 L99.0 89.8 L100.0 91.9 L101.0 97.6 L102.0 109.1 L103.0 94.2 L104.0 88.1 L105.0 85.0 L106.0 83.5 L107.0 83.3 L108.0 84.5 L109.0 87.2 L110.0 92.4 L111.0 98.4 L112.0 92.6 L113.0 88.0 L114.0 85.8 L115.0 85.4 L116.0 86.5 L117.0 89.5 L118.0 95.6 L119.0 102.3 L120.0 94.3 L121.0 89.8 L122.0 88.0 L123.0 88.1 L124.0 90.0 L125.0 94.7 L126.0 105.5 L127.0 98.3 L128.0 91.4 L129.0 88.3 L130.0 87.1 L131.0 87.2 L132.0 88.7 L133.0 91.8 L134.0 97.6 L135.0 111.9 L136.0 106.0 L137.0 99.2 L138.0 97.3 L139.0 97.7 L140.0 99.5 L141.0 100.8 L142.0 99.5 L143.0 97.6 L144.0 96.7 L145.0 96.7 L146.0 96.4 L147.0 94.2 L148.0 91.1 L149.0 88.4 L150.0 86.5 L151.0 85.4 L152.0 85.1 L153.0 85.6 L154.0 87.1 L155.0 89.7 L156.0 94.3 L157.0 103.6 L158.0 108.5 L159.0 98.1 L160.0 94.4 L161.0 93.3 L162.0 94.2 L163.0 97.7 L164.0 106.5 L165.0 101.0 L166.0 92.8 L167.0 88.3 L168.0 85.6 L169.0 84.0 L170.0 83.5 L171.0 83.8 L172.0 85.1 L173.0 87.7 L174.0 92.1 L175.0 97.0 L176.0 94.2 L177.0 89.9 L178.0 87.5 L179.0 86.6 L180.0 87.0 L181.0 88.8 L182.0 92.0 L183.0 95.9 L184.0 95.7 L185.0 92.5 L186.0 90.5 L187.0 90.2 L188.0 91.9 L189.0 96.8 L190.0 112.9 L191.0 97.2 L192.0 89.9 L193.0 86.2 L194.0 84.2 L195.0 83.4 L196.0 83.6 L197.0 84.7 L198.0 86.7 L199.0 89.5 L200.0 91.6 L201.0 91.1 L202.0 89.3 L203.0 88.1 L204.0 88.0 L205.0 89.2 L206.0 92.0 L207.0 97.6 L208.0 108.1 L209.0 99.4 L210.0 93.6 L211.0 91.0 L212.0 90.2 L213.0 90.8 L214.0 92.8 L215.0 96.6 L216.0 99.6 L217.0 96.0 L218.0 91.8 L219.0 89.1 L220.0 87.6 L221.0 87.0 L222.0 87.2 L223.0 88.2 L224.0 89.7 L225.0 91.5 L226.0 92.7 L227.0 92.7 L228.0 91.8 L229.0 90.9 L230.0 90.5 L231.0 90.6 L232.0 91.3 L233.0 92.6 L234.0 94.3 L235.0 96.3 L236.0 98.2 L237.0 99.5 L238.0 100.3 L239.0 101.0 L240.0 102.1 L241.0 104.2 L242.0 108.0 L243.0 115.0 L244.0 113.1 L245.0 105.3 L246.0 100.5 L247.0 97.4 L248.0 95.4 L249.0 94.3 L250.0 93.9 L251.0 94.4 L252.0 95.8 L253.0 98.3 L254.0 102.3 L255.0 105.7 L256.0 103.1 L257.0 99.7 L258.0 97.9 L259.0 97.6 L260.0 98.8 L261.0 101.2 L262.0 101.7 L263.0 97.8 L264.0 85.8 L265.0 62.7 L266.0 44.1 L267.0 30.0 L268.0 19.9 L269.0 13.7 L270.0 11.0 L271.0 11.3 L272.0 14.2 L273.0 19.0 L274.0 25.4 L275.0 33.2 L276.0 42.3 L277.0 52.7 L278.0 64.3 L279.0 77.0 L280.0 90.1 L281.0 90.4 L282.0 91.3 L283.0 93.2 L284.0 96.6 L285.0 101.4 L286.0 99.4 L287.0 93.5 L288.0 89.6 L289.0 87.1 L290.0 85.6 L291.0 85.1 L292.0 85.4 L293.0 86.6 L294.0 89.0 L295.0 93.2 L296.0 101.8 L297.0 104.3 L298.0 94.9 L299.0 90.6 L300.0 88.3 L301.0 87.2 L302.0 87.0 L303.0 87.5 L304.0 88.6 L305.0 90.2 L306.0 92.0 L307.0 93.4 L308.0 93.3 L309.0 92.1 L310.0 90.9 L311.0 90.2 L312.0 90.1 L313.0 90.9 L314.0 92.7 L315.0 95.8 L316.0 100.3 L317.0 102.4 L318.0 98.9 L319.0 96.0 L320.0 95.0 L321.0 95.8 L322.0 99.2 L323.0 110.0 L324.0 105.8 L325.0 95.5 L326.0 90.6 L327.0 87.7 L328.0 86.1 L329.0 85.4 L330.0 85.5 L331.0 86.2 L332.0 87.7 L333.0 89.5 L334.0 91.2 L335.0 91.9 L336.0 91.6 L337.0 91.2 L338.0 91.2 L339.0 92.1 L340.0 94.2 L341.0 98.1 L342.0 104.7 L343.0 105.5 L344.0 98.8 L345.0 94.8 L346.0 92.5 L347.0 91.3 L348.0 90.9 L349.0 91.0 L350.0 91.5 L351.0 92.3 L352.0 93.0 L353.0 93.4 L354.0 93.5 L355.0 93.3 L356.0 93.1 L357.0 93.0 L358.0 93.2 L359.0 93.7 L360.0 94.3 L361.0 94.8 L362.0 94.9 L363.0 94.6 L364.0 94.2 L365.0 94.1 L366.0 94.4 L367.0 95.6 L368.0 97.9 L369.0 102.2 L370.0 112.0 L371.0 113.8 L372.0 103.4 L373.0 99.3 L374.0 97.5 L375.0 97.4 L376.0 98.9 L377.0 102.4 L378.0 110.6 L379.0 118.1 L380.0 105.5 L381.0 101.3 L382.0 99.9 L383.0 100.7 L384.0 103.1 L385.0 103.7 L386.0 99.3 L387.0 95.0 L388.0 92.1 L389.0 90.5 L390.0 89.9 L391.0 90.5 L392.0 92.2 L393.0 95.9 L394.0 103.4 L395.0 108.2 L396.0 98.2 L397.0 93.5 L398.0 91.1 L399.0 90.0 L400.0 89.8 L401.0 90.1 L402.0 90.6 L403.0 91.0 L404.0 91.2 L405.0 91.2 L406.0 91.5 L407.0 92.3 L408.0 93.8 L409.0 95.9 L410.0 98.2 L411.0 99.4 L412.0 98.8 L413.0 97.7 L414.0 97.0 L415.0 96.9 L416.0 97.1 L417.0 97.3 L418.0 97.0 L419.0 96.4 L420.0 95.9 L421.0 95.9 L422.0 96.2 L423.0 96.9 L424.0 97.5 L425.0 97.4 L426.0 96.6 L427.0 95.5 L428.0 94.6 L429.0 94.0 L430.0 93.9 L431.0 94.0 L432.0 94.4 L433.0 95.0 L434.0 95.5 L435.0 96.0 L436.0 96.4 L437.0 96.9 L438.0 97.6 L439.0 98.9 L440.0 101.3 L441.0 105.3 L442.0 113.2 L443.0 120.8 L444.0 110.2 L445.0 106.7 L446.0 106.8 L447.0 111.5 L448.0 127.6 L449.0 105.5 L450.0 98.2 L451.0 94.0 L452.0 91.4 L453.0 89.8 L454.0 89.2 L455.0 89.4 L456.0 90.6 L457.0 92.7 L458.0 96.3 L459.0 102.1 L460.0 111.8 L461.0 110.4 L462.0 106.1 L463.0 106.1 L464.0 110.4 L465.0 117.7 L466.0 107.1 L467.0 101.3 L468.0 98.4 L469.0 97.2 L470.0 97.1 L471.0 97.2 L472.0 96.1 L473.0 93.7 L474.0 91.1 L475.0 89.1 L476.0 87.8 L477.0 87.2 L478.0 87.3 L479.0 88.1 L480.0 89.6 L481.0 91.9 L482.0 95.1 L483.0 98.5 L484.0 99.2 L485.0 96.7 L486.0 94.1 L487.0 92.2 L488.0 91.1 L489.0 90.5 L490.0 90.5 L491.0 90.6 L492.0 90.5 L493.0 89.6 L494.0 88.0 L495.0 86.3 L496.0 84.8 L497.0 83.9 L498.0 83.6 L499.0 84.0 L500.0 84.9 L501.0 86.6 L502.0 88.7 L503.0 90.6 L504.0 91.1 L505.0 90.2 L506.0 89.4 L507.0 89.2 L508.0 89.9 L509.0 91.9 L510.0 95.2 L511.0 99.6 L512.0 99.9 L513.0 96.2 L514.0 93.5 L515.0 92.3 L516.0 92.2 L517.0 93.1 L518.0 94.5 L519.0 95.5 L520.0 95.1 L521.0 93.7 L522.0 92.4 L523.0 91.8 L524.0 92.2 L525.0 93.5 L526.0 96.3 L527.0 101.4 L528.0 113.5 L529.0 110.3 L530.0 102.1 L531.0 99.3 L532.0 98.9 L533.0 100.6 L534.0 104.6" stroke="#e0906c" stroke-width="1.05" fill="none" stroke-linejoin="round"/><path d="M0.0 87.0 L6.0 89.0 L11.5 92.0 L16.0 87.0 L22.0 81.0 L29.0 78.0 L35.0 80.0 L42.0 86.0 L48.0 88.0 L54.0 82.0 L60.0 81.0 L66.5 77.0 L72.0 76.0 L79.0 75.0 L86.5 74.0 L94.0 74.5 L104.0 72.0 L110.0 73.5 L116.5 74.0 L122.0 72.0 L127.0 73.0 L131.5 72.5 L135.0 69.0 L137.8 67.0 L144.0 66.8 L152.0 66.5 L159.0 66.0 L167.0 64.0 L176.0 62.5 L186.5 60.8 L199.0 56.0 L212.0 51.0 L224.0 46.5 L236.0 40.5 L249.0 33.0 L259.0 27.5 L265.0 24.0 L267.8 23.0 L271.0 25.0 L274.0 28.0 L277.0 33.0 L280.0 39.5 L281.5 49.0 L282.8 72.0 L283.8 63.0 L285.0 55.8 L288.0 57.0 L294.0 57.5 L304.0 58.5 L314.0 60.0 L318.0 59.0 L324.0 60.0 L339.0 61.5 L354.0 63.5 L364.0 64.0 L374.0 64.5 L382.0 65.0 L389.0 66.0 L399.0 66.0 L414.0 66.5 L420.0 65.0 L424.0 66.0 L434.0 67.0 L449.0 68.0 L464.0 67.5 L481.0 68.0 L494.0 67.5 L511.0 68.5 L519.0 67.5 L534.0 67.0" stroke="#dcdca4" stroke-width="1.05" fill="none" stroke-linejoin="round"/><path d="M265 128 L267.5 132 L270 128" stroke="#ddd" stroke-width="0.9" fill="none"/></svg>
<span class="t" id="t92" style="top:109.4px;font-size:7.5px;line-height:9.8px;color:#f4f4f4;left:744px;transform-origin:0 50%;transform:scaleX(0.9636);font-family:'Liberation Sans',sans-serif;text-shadow:0 0 0.5px #fff;">MR: -38.89 dBm</span>
<span class="t" id="t93" style="top:117.1px;font-size:7.5px;line-height:9.8px;color:#f4f4f4;left:744px;transform-origin:0 50%;transform:scaleX(0.9792);font-family:'Liberation Sans',sans-serif;text-shadow:0 0 0.5px #fff;">10.51815 GHz</span>
<span class="t" id="t94" style="top:110.65px;font-size:7px;line-height:9.1px;color:#fff;left:998px;transform-origin:50% 50%;transform:translateX(-50%) scaleX(1.0000);font-weight:bold;font-family:'Liberation Sans',sans-serif;">MR</span>
<svg class="a" style="left:992px;top:119px;" width="11" height="11" viewBox="0 0 11 11"><path d="M5.5 0.5 L10.5 5.5 L5.5 10.5 L0.5 5.5 Z" fill="#fff"/></svg>
<div class="a" style="left:643.5px;top:260px;width:635.0px;height:2.5px;background:#dbe8ec;"></div>
<div class="a" style="left:643.5px;top:262.5px;width:635.0px;height:15px;background:linear-gradient(#c2cfcd 0%,#cad7d5 50%,#d5e2e1 100%);"></div>
<span class="t" id="t95" style="top:262.55px;font-size:11px;line-height:14.3px;color:#f3f9fa;left:659.8px;transform-origin:0 50%;transform:scaleX(0.8378);font-weight:bold;font-family:'Liberation Serif',serif;letter-spacing:0.1px;text-shadow:0 0 0.7px #fff;">Time Overview</span>
<div class="a" style="left:1254.7px;top:264.5px;width:11px;height:11px;border:1px solid rgba(232,242,242,0.7);box-sizing:border-box;border-radius:2px;"><div class="a" style="left:2px;top:2px;width:5px;height:2px;background:rgba(236,244,244,0.7)"></div></div>
<div class="a" style="left:1268.7px;top:264.5px;width:11px;height:11px;border:1px solid rgba(232,242,242,0.7);box-sizing:border-box;border-radius:2px;"><svg width="9" height="9" viewBox="0 0 9 9" style="position:absolute;left:0;top:0"><path d="M2 2 L7 7 M7 2 L2 7" stroke="rgba(236,244,244,0.7)" stroke-width="1.2"/></svg></div>
<div class="a" style="left:646px;top:265px;width:10px;height:10px;background:#202020;"><div class="a" style="left:1px;top:4px;width:8px;height:2px;background:#bbb"></div><div class="a" style="left:4px;top:1px;width:2px;height:8px;background:#888"></div></div>
<span class="t" id="t96" style="top:282.25px;font-size:8.5px;line-height:11.1px;color:#2a2f33;left:648px;transform-origin:0 50%;transform:scaleX(0.9524);">Time:</span>
<div class="a" style="left:648px;top:293.5px;width:56px;height:13px;background:#f2fcff;border:1px solid #d3e3ea;box-sizing:border-box;"></div>
<div class="a" style="left:694px;top:294.5px;width:9px;height:11px;background:linear-gradient(#eaf6fd,#cfe6f4);border:1px solid #7fb4d8;box-sizing:border-box;border-radius:2px;"><svg width="7" height="9" viewBox="0 0 7 9" style="position:absolute;left:0;top:0"><path d="M1.5 3.0 L3.5 6.0 L5.5 3.0" stroke="#3b7fb5" stroke-width="1" fill="none"/></svg></div>
<span class="t" id="t97" style="top:295.25px;font-size:8.5px;line-height:11.1px;color:#2a2f33;left:651px;transform-origin:0 50%;transform:scaleX(0.9300);">Analysis</span>
<span class="t" id="t98" style="top:319.75px;font-size:8.5px;line-height:11.1px;color:#2a2f33;left:648px;transform-origin:0 50%;transform:scaleX(0.9615);">Offset:</span>
<div class="a" style="left:648.5px;top:330px;width:52px;height:13.5px;background:#f3fcff;border:1px solid #d9e5ea;box-sizing:border-box;"></div>
<span class="t" id="t99" style="top:331.95px;font-size:9px;line-height:11.7px;color:#2a2f33;left:651px;transform-origin:0 50%;transform:scaleX(0.9302);">-16.139 us</span>
<span class="t" id="t100" style="top:347.75px;font-size:8.5px;line-height:11.1px;color:#2a2f33;left:648px;transform-origin:0 50%;transform:scaleX(0.9655);">Length:</span>
<div class="a" style="left:648.5px;top:358px;width:52px;height:13.5px;background:#f3fcff;border:1px solid #d9e5ea;box-sizing:border-box;"></div>
<span class="t" id="t101" style="top:359.95px;font-size:9px;line-height:11.7px;color:#2a2f33;left:651px;transform-origin:0 50%;transform:scaleX(0.8947);">3.000 ms</span>
<svg class="a" style="left:646px;top:401px;" width="7" height="7" viewBox="0 0 7 7"><circle cx="3.4" cy="3.8" r="2" fill="#4a4a4a"/><path d="M1.6 3.2 A2 2 0 0 1 4.6 2.2 L3.4 3.6 Z" fill="#e8eef0"/></svg>
<span class="t" id="t102" style="top:393.75px;font-size:8.5px;line-height:11.1px;color:#2a2f33;left:654px;transform-origin:0 50%;transform:scaleX(0.9615);">dB/div:</span>
<span class="t" id="t103" style="top:404.25px;font-size:8.5px;line-height:11.1px;color:#2a2f33;left:657px;transform-origin:0 50%;transform:scaleX(0.9333);">10.0 dB</span>
<div class="a" style="left:647.5px;top:435px;width:48px;height:14.5px;background:linear-gradient(#f6fdff,#e3f1f6);border:1px solid #8fb4cc;box-sizing:border-box;border-radius:2px;"></div>
<span class="t" id="t104" style="top:437.5px;font-size:8.5px;line-height:11.1px;color:#2a2f33;left:671.5px;transform-origin:50% 50%;transform:translateX(-50%) scaleX(0.9459);">Autoscale</span>
<svg class="a" style="left:744px;top:442px;" width="7" height="7" viewBox="0 0 7 7"><circle cx="3.4" cy="3.8" r="2" fill="#4a4a4a"/><path d="M1.6 3.2 A2 2 0 0 1 4.6 2.2 L3.4 3.6 Z" fill="#e8eef0"/></svg>
<span class="t" id="t105" style="top:440.25px;font-size:8.5px;line-height:11.1px;color:#2a2f33;left:755px;transform-origin:0 50%;transform:scaleX(0.9688);">Position:</span>
<span class="t" id="t106" style="top:440.25px;font-size:8.5px;line-height:11.1px;color:#2a2f33;left:790px;transform-origin:0 50%;transform:scaleX(0.9565);">-278.429 us</span>
<svg class="a" style="left:1191px;top:442px;" width="7" height="7" viewBox="0 0 7 7"><circle cx="3.4" cy="3.8" r="2" fill="#4a4a4a"/><path d="M1.6 3.2 A2 2 0 0 1 4.6 2.2 L3.4 3.6 Z" fill="#e8eef0"/></svg>
<span class="t" id="t107" style="top:440.25px;font-size:8.5px;line-height:11.1px;color:#2a2f33;left:1202px;transform-origin:0 50%;transform:scaleX(0.9130);">Scale:</span>
<span class="t" id="t108" style="top:440.25px;font-size:8.5px;line-height:11.1px;color:#2a2f33;left:1232px;transform-origin:0 50%;transform:scaleX(0.9444);">3.480 ms</span>
<span class="t" id="t109" style="top:282.75px;font-size:8.5px;line-height:11.1px;color:#2a2f33;right:545px;transform-origin:100% 50%;transform:scaleX(0.9300);">-20.0</span>
<div class="a" style="left:739px;top:287.0px;width:2.5px;height:1px;background:#556;"></div>
<span class="t" id="t110" style="top:311.15px;font-size:8.5px;line-height:11.1px;color:#2a2f33;right:545px;transform-origin:100% 50%;transform:scaleX(0.9300);">-40.0</span>
<div class="a" style="left:739px;top:315.4px;width:2.5px;height:1px;background:#556;"></div>
<span class="t" id="t111" style="top:339.55px;font-size:8.5px;line-height:11.1px;color:#2a2f33;right:545px;transform-origin:100% 50%;transform:scaleX(0.9300);">-60.0</span>
<div class="a" style="left:739px;top:343.8px;width:2.5px;height:1px;background:#556;"></div>
<span class="t" id="t112" style="top:367.95px;font-size:8.5px;line-height:11.1px;color:#2a2f33;right:545px;transform-origin:100% 50%;transform:scaleX(0.9300);">-80.0</span>
<div class="a" style="left:739px;top:372.2px;width:2.5px;height:1px;background:#556;"></div>
<span class="t" id="t113" style="top:396.35px;font-size:8.5px;line-height:11.1px;color:#2a2f33;right:545px;transform-origin:100% 50%;transform:scaleX(0.9300);">-100.0</span>
<div class="a" style="left:739px;top:400.6px;width:2.5px;height:1px;background:#556;"></div>
<span class="t" id="t114" style="top:424.75px;font-size:8.5px;line-height:11.1px;color:#2a2f33;right:545px;transform-origin:100% 50%;transform:scaleX(0.9300);">-120.0</span>
<div class="a" style="left:739px;top:429.0px;width:2.5px;height:1px;background:#556;"></div>
<svg class="a" style="left:744.5px;top:287.5px;" width="528.0" height="139.0" viewBox="0 0 528.0 139.0"><defs><clipPath id="an"><rect x="40.0" y="0" width="455.5" height="142.0"/></clipPath></defs>
<rect width="528.0" height="142.0" fill="#000"/>
<path d="M52.8 0 V142.0" stroke="#c8c8c8" stroke-width="0.8" opacity="0.7"/><path d="M105.6 0 V142.0" stroke="#c8c8c8" stroke-width="0.8" opacity="0.7"/><path d="M158.4 0 V142.0" stroke="#c8c8c8" stroke-width="0.8" opacity="0.7"/><path d="M211.2 0 V142.0" stroke="#c8c8c8" stroke-width="0.8" opacity="0.7"/><path d="M264.0 0 V142.0" stroke="#c8c8c8" stroke-width="0.8" opacity="0.7"/><path d="M316.8 0 V142.0" stroke="#c8c8c8" stroke-width="0.8" opacity="0.7"/><path d="M369.6 0 V142.0" stroke="#c8c8c8" stroke-width="0.8" opacity="0.7"/><path d="M422.4 0 V142.0" stroke="#c8c8c8" stroke-width="0.8" opacity="0.7"/><path d="M475.2 0 V142.0" stroke="#c8c8c8" stroke-width="0.8" opacity="0.7"/><path d="M0 14.2 H528.0" stroke="#c8c8c8" stroke-width="0.8" opacity="0.7"/><path d="M0 28.4 H528.0" stroke="#c8c8c8" stroke-width="0.8" opacity="0.7"/><path d="M0 42.6 H528.0" stroke="#c8c8c8" stroke-width="0.8" opacity="0.7"/><path d="M0 56.8 H528.0" stroke="#c8c8c8" stroke-width="0.8" opacity="0.7"/><path d="M0 71.0 H528.0" stroke="#c8c8c8" stroke-width="0.8" opacity="0.7"/><path d="M0 85.2 H528.0" stroke="#c8c8c8" stroke-width="0.8" opacity="0.7"/><path d="M0 99.4 H528.0" stroke="#c8c8c8" stroke-width="0.8" opacity="0.7"/><path d="M0 113.6 H528.0" stroke="#c8c8c8" stroke-width="0.8" opacity="0.7"/><path d="M0 127.8 H528.0" stroke="#c8c8c8" stroke-width="0.8" opacity="0.7"/>
<path d="M0 28.4 H528.0" stroke="#2a8c8c" stroke-width="0.9"/>
<path d="M0.0 52.8 L0.9 54.1 L1.8 52.9 L2.7 54.8 L3.6 55.0 L4.5 52.2 L5.4 52.1 L6.3 55.0 L7.2 54.7 L8.1 52.3 L9.0 53.5 L9.9 53.3 L10.8 55.1 L11.7 55.4 L12.6 55.3 L13.5 52.7 L14.4 54.9 L15.3 53.4 L16.2 52.0 L17.1 55.0 L18.0 53.1 L18.9 54.1 L19.8 53.1 L20.7 53.6 L21.6 53.9 L22.5 53.5 L23.4 55.3 L24.3 52.1 L25.2 53.6 L26.1 51.5 L27.0 55.3 L27.9 53.1 L28.8 54.0 L29.7 52.1 L30.6 52.8 L31.5 54.4 L32.4 54.8 L33.3 54.2 L34.2 53.8 L35.1 52.6 L36.0 54.7 L36.9 52.9 L37.8 53.4 L38.7 55.4 L39.6 52.8 L40.5 53.8 L41.4 54.0 L42.3 55.1 L43.2 52.0 L44.1 53.8 L45.0 53.2 L45.9 54.7 L46.8 54.8 L47.7 54.7 L48.6 51.9 L49.5 53.4 L50.4 52.4 L51.3 52.3 L52.2 53.2 L53.1 52.6 L54.0 54.4 L54.9 54.1 L55.8 54.1 L56.7 54.4 L57.6 52.8 L58.5 53.4 L59.4 55.1 L60.3 52.4 L61.2 54.7 L62.1 52.4 L63.0 52.2 L63.9 49.6 L64.8 54.3 L65.7 51.7 L66.6 54.4 L67.5 52.2 L68.4 52.8 L69.3 54.6 L70.2 53.2 L71.1 55.3 L72.0 54.6 L72.9 54.2 L73.8 55.1 L74.7 52.6 L75.6 53.1 L76.5 53.0 L77.4 54.0 L78.3 52.6 L79.2 52.5 L80.1 53.6 L81.0 53.6 L81.9 54.5 L82.8 54.4 L83.7 52.8 L84.6 54.9 L85.5 53.1 L86.4 54.8 L87.3 51.3 L88.2 53.7 L89.1 53.3 L90.0 52.4 L90.9 53.3 L91.8 54.2 L92.7 55.3 L93.6 53.2 L94.5 52.6 L95.4 54.2 L96.3 54.4 L97.2 53.6 L98.1 54.6 L99.0 52.9 L99.9 54.6 L100.8 53.8 L101.7 52.4 L102.6 54.5 L103.5 54.5 L104.4 52.5 L105.3 53.9 L106.2 52.1 L107.1 53.3 L108.0 55.3 L108.9 53.6 L109.8 53.7 L110.7 52.1 L111.6 53.9 L112.5 51.1 L113.4 53.8 L114.3 54.4 L115.2 55.2 L116.1 54.7 L117.0 54.6 L117.9 52.5 L118.8 53.4 L119.7 54.6 L120.6 54.4 L121.5 54.0 L122.4 52.5 L123.3 53.4 L124.2 50.7 L125.1 53.4 L126.0 50.3 L126.9 53.6 L127.8 49.4 L128.7 53.6 L129.6 54.8 L130.5 55.3 L131.4 49.1 L132.3 52.7 L133.2 55.1 L134.1 54.1 L135.0 52.4 L135.9 55.2 L136.8 54.8 L137.7 53.4 L138.6 52.9 L139.5 54.4 L140.4 52.1 L141.3 52.3 L142.2 55.0 L143.1 54.5 L144.0 55.2 L144.9 54.2 L145.8 51.0 L146.7 52.7 L147.6 54.1 L148.5 52.3 L149.4 55.0 L150.3 54.1 L151.2 53.2 L152.1 54.0 L153.0 53.6 L153.9 53.6 L154.8 53.4 L155.7 55.4 L156.6 52.6 L157.5 55.4 L158.4 53.4 L159.3 53.6 L160.2 55.1 L161.1 54.5 L162.0 52.1 L162.9 53.2 L163.8 53.0 L164.7 54.4 L165.6 53.3 L166.5 53.8 L167.4 53.0 L168.3 53.0 L169.2 53.8 L170.1 53.6 L171.0 52.1 L171.9 50.2 L172.8 52.8 L173.7 53.5 L174.6 54.7 L175.5 54.7 L176.4 53.0 L177.3 55.0 L178.2 55.2 L179.1 53.8 L180.0 55.4 L180.9 53.5 L181.8 52.5 L182.7 54.9 L183.6 52.1 L184.5 53.0 L185.4 53.3 L186.3 54.2 L187.2 54.8 L188.1 55.2 L189.0 52.9 L189.9 52.3 L190.8 54.1 L191.7 52.2 L192.6 52.2 L193.5 52.6 L194.4 49.5 L195.3 54.8 L196.2 53.8 L197.1 55.4 L198.0 53.2 L198.9 55.4 L199.8 55.2 L200.7 52.1 L201.6 53.9 L202.5 53.8 L203.4 55.2 L204.3 54.9 L205.2 55.3 L206.1 55.0 L207.0 53.8 L207.9 53.5 L208.8 53.7 L209.7 54.0 L210.6 54.8 L211.5 53.7 L212.4 53.0 L213.3 53.8 L214.2 53.5 L215.1 54.9 L216.0 53.3 L216.9 55.0 L217.8 53.2 L218.7 53.3 L219.6 52.5 L220.5 52.5 L221.4 53.8 L222.3 54.8 L223.2 54.3 L224.1 53.6 L225.0 54.0 L225.9 52.0 L226.8 53.7 L227.7 53.5 L228.6 52.3 L229.5 49.2 L230.4 55.0 L231.3 54.0 L232.2 52.3 L233.1 53.8 L234.0 54.9 L234.9 54.2 L235.8 52.5 L236.7 54.6 L237.6 49.7 L238.5 52.7 L239.4 55.2 L240.3 52.7 L241.2 53.3 L242.1 53.3 L243.0 53.2 L243.9 53.9 L244.8 54.1 L245.7 53.8 L246.6 52.2 L247.5 54.0 L248.4 52.8 L249.3 55.4 L250.2 53.2 L251.1 54.9 L252.0 53.5 L252.9 52.7 L253.8 53.0 L254.7 55.4 L255.6 54.3 L256.5 53.9 L257.4 53.3 L258.3 54.5 L259.2 54.0 L260.1 52.7 L261.0 55.1 L261.9 52.2 L262.8 52.4 L263.7 52.9 L264.6 53.7 L265.5 54.7 L266.4 54.6 L267.3 53.1 L268.2 52.9 L269.1 54.5 L270.0 54.7 L270.9 50.3 L271.8 52.7 L272.7 54.9 L273.6 55.1 L274.5 54.5 L275.4 54.3 L276.3 55.0 L277.2 53.3 L278.1 52.9 L279.0 49.6 L279.9 55.3 L280.8 54.7 L281.7 52.8 L282.6 52.8 L283.5 53.9 L284.4 52.1 L285.3 52.9 L286.2 54.5 L287.1 52.2 L288.0 54.0 L288.9 52.6 L289.8 53.6 L290.7 52.0 L291.6 55.0 L292.5 53.0 L293.4 52.5 L294.3 52.1 L295.2 53.8 L296.1 52.3 L297.0 52.0 L297.9 53.4 L298.8 53.6 L299.7 54.5 L300.6 54.2 L301.5 52.7 L302.4 54.1 L303.3 53.7 L304.2 53.2 L305.1 54.6 L306.0 52.8 L306.9 54.5 L307.8 53.3 L308.7 54.2 L309.6 54.7 L310.5 55.1 L311.4 53.0 L312.3 52.5 L313.2 53.1 L314.1 55.2 L315.0 53.0 L315.9 55.2 L316.8 53.0 L317.7 53.4 L318.6 55.2 L319.5 52.7 L320.4 55.1 L321.3 52.2 L322.2 52.7 L323.1 52.4 L324.0 54.2 L324.9 52.1 L325.8 52.4 L326.7 53.1 L327.6 53.5 L328.5 54.9 L329.4 54.9 L330.3 52.0 L331.2 53.5 L332.1 52.4 L333.0 52.9 L333.9 54.9 L334.8 52.4 L335.7 54.7 L336.6 53.9 L337.5 54.8 L338.4 52.1 L339.3 54.5 L340.2 52.0 L341.1 52.7 L342.0 53.5 L342.9 54.7 L343.8 55.1 L344.7 54.4 L345.6 54.6 L346.5 54.5 L347.4 53.5 L348.3 54.0 L349.2 53.6 L350.1 53.7 L351.0 52.7 L351.9 52.2 L352.8 52.7 L353.7 51.0 L354.6 53.5 L355.5 54.8 L356.4 50.7 L357.3 53.0 L358.2 54.9 L359.1 53.2 L360.0 52.3 L360.9 54.2 L361.8 52.5 L362.7 54.8 L363.6 51.4 L364.5 55.2 L365.4 52.9 L366.3 52.3 L367.2 54.6 L368.1 53.5 L369.0 55.2 L369.9 54.5 L370.8 54.1 L371.7 52.7 L372.6 55.0 L373.5 52.6 L374.4 54.6 L375.3 52.7 L376.2 53.2 L377.1 53.3 L378.0 53.8 L378.9 54.6 L379.8 54.8 L380.7 53.8 L381.6 54.2 L382.5 55.2 L383.4 52.1 L384.3 53.1 L385.2 52.9 L386.1 54.6 L387.0 54.6 L387.9 52.0 L388.8 55.0 L389.7 53.2 L390.6 52.2 L391.5 54.9 L392.4 54.8 L393.3 53.4 L394.2 54.7 L395.1 52.6 L396.0 54.8 L396.9 49.8 L397.8 53.0 L398.7 52.3 L399.6 52.5 L400.5 52.2 L401.4 53.2 L402.3 52.1 L403.2 54.9 L404.1 54.4 L405.0 53.6 L405.9 54.5 L406.8 55.3 L407.7 55.0 L408.6 52.4 L409.5 52.3 L410.4 52.8 L411.3 53.6 L412.2 52.4 L413.1 53.1 L414.0 55.4 L414.9 54.4 L415.8 52.7 L416.7 53.9 L417.6 52.7 L418.5 55.3 L419.4 54.6 L420.3 54.0 L421.2 54.7 L422.1 54.1 L423.0 53.3 L423.9 53.5 L424.8 54.7 L425.7 54.5 L426.6 54.1 L427.5 54.8 L428.4 53.3 L429.3 54.0 L430.2 49.6 L431.1 54.1 L432.0 49.5 L432.9 52.4 L433.8 54.3 L434.7 54.7 L435.6 54.2 L436.5 54.6 L437.4 52.1 L438.3 54.0 L439.2 55.1 L440.1 52.5 L441.0 54.9 L441.9 53.9 L442.8 53.6 L443.7 53.1 L444.6 53.1 L445.5 53.2 L446.4 52.4 L447.3 53.7 L448.2 55.0 L449.1 52.7 L450.0 53.9 L450.9 55.4 L451.8 50.4 L452.7 52.2 L453.6 53.0 L454.5 54.9 L455.4 54.0 L456.3 52.7 L457.2 53.7 L458.1 54.8 L459.0 55.0 L459.9 53.8 L460.8 53.1 L461.7 54.9 L462.6 52.4 L463.5 54.9 L464.4 49.3 L465.3 52.5 L466.2 52.9 L467.1 53.3 L468.0 52.9 L468.9 52.4 L469.8 53.5 L470.7 52.8 L471.6 52.7 L472.5 53.5 L473.4 52.1 L474.3 55.3 L475.2 53.3 L476.1 53.8 L477.0 52.3 L477.9 55.1 L478.8 52.7 L479.7 54.2 L480.6 52.9 L481.5 53.7 L482.4 53.2 L483.3 53.4 L484.2 54.0 L485.1 55.3 L486.0 53.2 L486.9 54.7 L487.8 54.3 L488.7 53.0 L489.6 53.2 L490.5 53.8 L491.4 52.4 L492.3 54.0 L493.2 53.5 L494.1 53.5 L495.0 52.4 L495.9 53.8 L496.8 51.6 L497.7 54.1 L498.6 54.0 L499.5 52.7 L500.4 55.2 L501.3 55.2 L502.2 53.7 L503.1 54.4 L504.0 55.4 L504.9 52.5 L505.8 55.4 L506.7 55.1 L507.6 52.0 L508.5 52.3 L509.4 55.2 L510.3 54.1 L511.2 54.1 L512.1 52.9 L513.0 52.5 L513.9 54.0 L514.8 53.0 L515.7 52.1 L516.6 54.5 L517.5 55.4 L518.4 54.2 L519.3 55.2 L520.2 54.8 L521.1 49.7 L522.0 52.1 L522.9 52.6 L523.8 54.9 L524.7 53.4 L525.6 53.9 L526.5 53.9 L527.4 53.3 L527.4 88.0 L526.5 80.4 L525.6 86.3 L524.7 84.3 L523.8 82.3 L522.9 82.5 L522.0 89.6 L521.1 83.3 L520.2 83.4 L519.3 81.8 L518.4 81.1 L517.5 82.7 L516.6 89.6 L515.7 83.4 L514.8 84.2 L513.9 82.9 L513.0 82.6 L512.1 83.3 L511.2 83.4 L510.3 100.3 L509.4 90.7 L508.5 82.3 L507.6 87.4 L506.7 80.2 L505.8 83.2 L504.9 84.3 L504.0 84.0 L503.1 85.0 L502.2 80.6 L501.3 92.0 L500.4 80.6 L499.5 88.6 L498.6 83.7 L497.7 83.4 L496.8 83.8 L495.9 83.2 L495.0 83.8 L494.1 97.7 L493.2 83.3 L492.3 92.3 L491.4 87.1 L490.5 80.9 L489.6 83.8 L488.7 82.5 L487.8 83.9 L486.9 84.4 L486.0 83.9 L485.1 80.6 L484.2 82.7 L483.3 88.0 L482.4 81.3 L481.5 81.1 L480.6 89.5 L479.7 81.8 L478.8 97.3 L477.9 87.6 L477.0 80.2 L476.1 83.7 L475.2 90.9 L474.3 95.7 L473.4 82.1 L472.5 82.8 L471.6 83.4 L470.7 87.7 L469.8 84.3 L468.9 84.0 L468.0 85.1 L467.1 81.2 L466.2 87.8 L465.3 83.8 L464.4 89.7 L463.5 81.3 L462.6 80.1 L461.7 81.2 L460.8 80.4 L459.9 87.6 L459.0 86.0 L458.1 84.1 L457.2 86.9 L456.3 91.5 L455.4 82.5 L454.5 91.0 L453.6 82.0 L452.7 84.1 L451.8 83.6 L450.9 92.4 L450.0 89.8 L449.1 82.8 L448.2 81.1 L447.3 80.9 L446.4 82.8 L445.5 81.0 L444.6 83.9 L443.7 83.7 L442.8 90.0 L441.9 84.3 L441.0 81.5 L440.1 84.2 L439.2 80.6 L438.3 98.9 L437.4 93.2 L436.5 83.2 L435.6 82.6 L434.7 82.8 L433.8 82.9 L432.9 88.8 L432.0 84.3 L431.1 84.2 L430.2 82.2 L429.3 90.7 L428.4 91.4 L427.5 87.7 L426.6 86.7 L425.7 80.4 L424.8 83.2 L423.9 84.4 L423.0 82.7 L422.1 89.8 L421.2 80.6 L420.3 83.0 L419.4 80.9 L418.5 84.2 L417.6 84.3 L416.7 88.5 L415.8 81.4 L414.9 88.0 L414.0 83.8 L413.1 96.1 L412.2 92.3 L411.3 81.3 L410.4 83.7 L409.5 80.1 L408.6 81.9 L407.7 81.8 L406.8 80.6 L405.9 81.0 L405.0 84.4 L404.1 92.3 L403.2 82.5 L402.3 83.5 L401.4 80.8 L400.5 82.8 L399.6 92.1 L398.7 84.0 L397.8 80.9 L396.9 83.2 L396.0 83.5 L395.1 82.0 L394.2 80.8 L393.3 95.3 L392.4 82.8 L391.5 81.6 L390.6 90.3 L389.7 91.6 L388.8 81.4 L387.9 88.1 L387.0 80.4 L386.1 91.4 L385.2 83.6 L384.3 80.6 L383.4 82.8 L382.5 82.6 L381.6 91.4 L380.7 82.7 L379.8 81.0 L378.9 80.9 L378.0 84.4 L377.1 82.0 L376.2 84.1 L375.3 82.6 L374.4 80.9 L373.5 83.8 L372.6 83.9 L371.7 82.1 L370.8 99.9 L369.9 81.7 L369.0 81.6 L368.1 84.0 L367.2 96.2 L366.3 81.8 L365.4 89.1 L364.5 82.8 L363.6 84.1 L362.7 80.7 L361.8 81.1 L360.9 93.4 L360.0 90.6 L359.1 90.9 L358.2 88.4 L357.3 82.6 L356.4 83.6 L355.5 80.0 L354.6 81.3 L353.7 90.5 L352.8 80.6 L351.9 82.0 L351.0 81.3 L350.1 82.2 L349.2 82.7 L348.3 84.3 L347.4 80.5 L346.5 81.8 L345.6 80.3 L344.7 81.5 L343.8 81.8 L342.9 85.4 L342.0 91.1 L341.1 80.6 L340.2 82.4 L339.3 83.4 L338.4 92.2 L337.5 97.5 L336.6 87.6 L335.7 83.0 L334.8 82.0 L333.9 90.1 L333.0 82.4 L332.1 80.8 L331.2 93.1 L330.3 82.2 L329.4 81.6 L328.5 81.7 L327.6 86.4 L326.7 82.2 L325.8 82.4 L324.9 86.8 L324.0 88.2 L323.1 81.8 L322.2 81.4 L321.3 90.8 L320.4 80.5 L319.5 84.4 L318.6 88.4 L317.7 81.3 L316.8 82.4 L315.9 84.1 L315.0 88.5 L314.1 81.7 L313.2 87.3 L312.3 83.7 L311.4 84.1 L310.5 82.7 L309.6 92.8 L308.7 93.4 L307.8 87.7 L306.9 83.4 L306.0 82.7 L305.1 87.8 L304.2 80.2 L303.3 84.0 L302.4 85.1 L301.5 87.4 L300.6 84.3 L299.7 87.6 L298.8 80.1 L297.9 82.5 L297.0 83.0 L296.1 82.3 L295.2 82.3 L294.3 89.1 L293.4 80.4 L292.5 81.4 L291.6 80.2 L290.7 80.0 L289.8 84.2 L288.9 91.0 L288.0 92.0 L287.1 91.7 L286.2 81.9 L285.3 82.7 L284.4 80.9 L283.5 85.9 L282.6 80.4 L281.7 83.6 L280.8 83.0 L279.9 83.6 L279.0 82.3 L278.1 87.9 L277.2 84.5 L276.3 88.5 L275.4 88.1 L274.5 90.1 L273.6 80.7 L272.7 98.8 L271.8 82.3 L270.9 80.8 L270.0 82.4 L269.1 83.1 L268.2 81.7 L267.3 80.7 L266.4 82.1 L265.5 92.0 L264.6 81.0 L263.7 80.8 L262.8 82.1 L261.9 81.4 L261.0 82.3 L260.1 87.5 L259.2 80.2 L258.3 87.6 L257.4 82.5 L256.5 83.1 L255.6 81.6 L254.7 86.4 L253.8 84.0 L252.9 83.4 L252.0 82.6 L251.1 82.4 L250.2 89.3 L249.3 80.8 L248.4 84.4 L247.5 84.0 L246.6 83.9 L245.7 82.8 L244.8 83.4 L243.9 90.8 L243.0 81.0 L242.1 89.0 L241.2 89.6 L240.3 80.2 L239.4 84.1 L238.5 81.0 L237.6 81.9 L236.7 83.9 L235.8 82.8 L234.9 90.2 L234.0 81.3 L233.1 86.7 L232.2 80.1 L231.3 80.9 L230.4 81.5 L229.5 82.2 L228.6 83.4 L227.7 84.4 L226.8 82.8 L225.9 86.5 L225.0 80.1 L224.1 90.1 L223.2 84.0 L222.3 84.1 L221.4 82.4 L220.5 84.6 L219.6 81.7 L218.7 83.9 L217.8 82.3 L216.9 83.9 L216.0 88.5 L215.1 80.3 L214.2 80.3 L213.3 84.4 L212.4 82.0 L211.5 81.5 L210.6 88.3 L209.7 84.2 L208.8 81.4 L207.9 82.7 L207.0 80.4 L206.1 84.5 L205.2 87.0 L204.3 84.6 L203.4 80.8 L202.5 80.9 L201.6 82.4 L200.7 83.4 L199.8 83.2 L198.9 81.1 L198.0 89.9 L197.1 84.5 L196.2 80.5 L195.3 80.2 L194.4 87.7 L193.5 83.0 L192.6 93.6 L191.7 89.0 L190.8 89.8 L189.9 83.3 L189.0 84.8 L188.1 85.7 L187.2 81.2 L186.3 89.8 L185.4 84.0 L184.5 91.8 L183.6 82.5 L182.7 84.2 L181.8 82.3 L180.9 82.0 L180.0 81.8 L179.1 80.8 L178.2 82.7 L177.3 82.1 L176.4 80.1 L175.5 83.7 L174.6 80.6 L173.7 83.0 L172.8 85.2 L171.9 87.6 L171.0 80.1 L170.1 83.5 L169.2 88.6 L168.3 96.3 L167.4 84.0 L166.5 81.6 L165.6 81.4 L164.7 84.4 L163.8 88.7 L162.9 87.1 L162.0 81.2 L161.1 82.3 L160.2 87.9 L159.3 81.8 L158.4 84.1 L157.5 84.2 L156.6 83.3 L155.7 86.5 L154.8 88.2 L153.9 82.5 L153.0 80.3 L152.1 80.9 L151.2 90.9 L150.3 83.4 L149.4 90.9 L148.5 96.7 L147.6 86.7 L146.7 81.9 L145.8 81.0 L144.9 87.7 L144.0 86.1 L143.1 87.5 L142.2 82.0 L141.3 83.8 L140.4 83.4 L139.5 90.2 L138.6 83.2 L137.7 83.5 L136.8 84.2 L135.9 83.3 L135.0 81.5 L134.1 89.3 L133.2 80.2 L132.3 82.1 L131.4 82.9 L130.5 89.8 L129.6 89.3 L128.7 86.2 L127.8 91.8 L126.9 82.8 L126.0 88.0 L125.1 80.2 L124.2 80.1 L123.3 84.3 L122.4 85.1 L121.5 88.5 L120.6 81.7 L119.7 80.8 L118.8 81.4 L117.9 83.1 L117.0 90.4 L116.1 83.9 L115.2 83.3 L114.3 83.9 L113.4 81.5 L112.5 85.2 L111.6 92.6 L110.7 82.9 L109.8 88.8 L108.9 101.3 L108.0 81.3 L107.1 82.6 L106.2 84.0 L105.3 81.1 L104.4 80.9 L103.5 83.4 L102.6 80.9 L101.7 88.9 L100.8 81.6 L99.9 81.5 L99.0 97.2 L98.1 83.3 L97.2 88.8 L96.3 82.5 L95.4 89.5 L94.5 92.1 L93.6 83.1 L92.7 88.9 L91.8 81.2 L90.9 91.1 L90.0 93.7 L89.1 88.2 L88.2 82.6 L87.3 81.5 L86.4 81.6 L85.5 86.9 L84.6 81.1 L83.7 89.1 L82.8 84.3 L81.9 86.7 L81.0 83.9 L80.1 83.7 L79.2 82.2 L78.3 81.4 L77.4 95.0 L76.5 81.9 L75.6 83.1 L74.7 80.9 L73.8 82.0 L72.9 88.9 L72.0 82.3 L71.1 91.2 L70.2 80.4 L69.3 81.7 L68.4 81.1 L67.5 82.5 L66.6 83.4 L65.7 83.5 L64.8 84.3 L63.9 92.7 L63.0 80.4 L62.1 88.4 L61.2 83.3 L60.3 83.0 L59.4 81.2 L58.5 84.2 L57.6 89.1 L56.7 83.1 L55.8 81.7 L54.9 81.7 L54.0 86.0 L53.1 80.6 L52.2 82.6 L51.3 81.4 L50.4 84.4 L49.5 92.8 L48.6 87.9 L47.7 80.0 L46.8 83.6 L45.9 80.9 L45.0 83.9 L44.1 84.2 L43.2 88.4 L42.3 84.0 L41.4 102.8 L40.5 85.0 L39.6 83.8 L38.7 84.3 L37.8 101.5 L36.9 81.9 L36.0 89.1 L35.1 83.6 L34.2 83.6 L33.3 85.9 L32.4 89.2 L31.5 81.4 L30.6 87.1 L29.7 83.3 L28.8 81.7 L27.9 81.4 L27.0 82.1 L26.1 80.3 L25.2 81.6 L24.3 90.2 L23.4 97.4 L22.5 81.1 L21.6 84.2 L20.7 82.9 L19.8 84.0 L18.9 80.2 L18.0 94.9 L17.1 82.3 L16.2 98.1 L15.3 81.3 L14.4 80.4 L13.5 86.0 L12.6 82.6 L11.7 80.7 L10.8 84.2 L9.9 82.6 L9.0 81.4 L8.1 81.0 L7.2 84.2 L6.3 84.1 L5.4 82.1 L4.5 82.7 L3.6 83.3 L2.7 90.3 L1.8 84.5 L0.9 80.1 L0.0 81.7 Z" fill="#f0f038"/>
<rect x="41.9" y="46.5" width="3.8" height="37.5" fill="#000"/><rect x="60.9" y="46.5" width="3.8" height="37.5" fill="#000"/><rect x="79.9" y="46.5" width="3.8" height="37.5" fill="#000"/><rect x="98.9" y="46.5" width="3.8" height="37.5" fill="#000"/><rect x="117.9" y="46.5" width="3.8" height="37.5" fill="#000"/><rect x="136.9" y="46.5" width="3.8" height="37.5" fill="#000"/><rect x="155.9" y="46.5" width="3.8" height="37.5" fill="#000"/><rect x="174.9" y="46.5" width="3.8" height="37.5" fill="#000"/><rect x="193.9" y="46.5" width="3.8" height="37.5" fill="#000"/><rect x="212.9" y="46.5" width="3.8" height="37.5" fill="#000"/><rect x="231.9" y="46.5" width="3.8" height="37.5" fill="#000"/><rect x="250.9" y="46.5" width="3.8" height="37.5" fill="#000"/><rect x="269.9" y="46.5" width="3.8" height="37.5" fill="#000"/><rect x="288.9" y="46.5" width="3.8" height="37.5" fill="#000"/><rect x="307.9" y="46.5" width="3.8" height="37.5" fill="#000"/><rect x="326.9" y="46.5" width="3.8" height="37.5" fill="#000"/><rect x="345.9" y="46.5" width="3.8" height="37.5" fill="#000"/><rect x="364.9" y="46.5" width="3.8" height="37.5" fill="#000"/><rect x="383.9" y="46.5" width="3.8" height="37.5" fill="#000"/><rect x="402.9" y="46.5" width="3.8" height="37.5" fill="#000"/><rect x="421.9" y="46.5" width="3.8" height="37.5" fill="#000"/><rect x="440.9" y="46.5" width="3.8" height="37.5" fill="#000"/><rect x="459.9" y="46.5" width="3.8" height="37.5" fill="#000"/><rect x="478.9" y="46.5" width="3.8" height="37.5" fill="#000"/><rect x="497.9" y="46.5" width="3.8" height="37.5" fill="#000"/><rect x="516.9" y="46.5" width="3.8" height="37.5" fill="#000"/>
<path d="M42.0 56.5 V11.1 H45.6 V56.5" stroke="#e4e4b0" stroke-width="1.25" fill="none"/><path d="M61.0 56.5 V11.1 H64.6 V56.5" stroke="#e4e4b0" stroke-width="1.25" fill="none"/><path d="M80.0 56.5 V11.1 H83.6 V56.5" stroke="#e4e4b0" stroke-width="1.25" fill="none"/><path d="M99.0 56.5 V11.1 H102.6 V56.5" stroke="#e4e4b0" stroke-width="1.25" fill="none"/><path d="M118.0 56.5 V11.1 H121.6 V56.5" stroke="#e4e4b0" stroke-width="1.25" fill="none"/><path d="M137.0 56.5 V11.1 H140.6 V56.5" stroke="#e4e4b0" stroke-width="1.25" fill="none"/><path d="M156.0 56.5 V11.1 H159.6 V56.5" stroke="#e4e4b0" stroke-width="1.25" fill="none"/><path d="M175.0 56.5 V11.1 H178.6 V56.5" stroke="#e4e4b0" stroke-width="1.25" fill="none"/><path d="M194.0 56.5 V11.1 H197.6 V56.5" stroke="#e4e4b0" stroke-width="1.25" fill="none"/><path d="M213.0 56.5 V11.1 H216.6 V56.5" stroke="#e4e4b0" stroke-width="1.25" fill="none"/><path d="M232.0 56.5 V11.1 H235.6 V56.5" stroke="#e4e4b0" stroke-width="1.25" fill="none"/><path d="M251.0 56.5 V11.1 H254.6 V56.5" stroke="#e4e4b0" stroke-width="1.25" fill="none"/><path d="M270.0 56.5 V11.1 H273.6 V56.5" stroke="#e4e4b0" stroke-width="1.25" fill="none"/><path d="M289.0 56.5 V11.1 H292.6 V56.5" stroke="#e4e4b0" stroke-width="1.25" fill="none"/><path d="M308.0 56.5 V11.1 H311.6 V56.5" stroke="#e4e4b0" stroke-width="1.25" fill="none"/><path d="M327.0 56.5 V11.1 H330.6 V56.5" stroke="#e4e4b0" stroke-width="1.25" fill="none"/><path d="M346.0 56.5 V11.1 H349.6 V56.5" stroke="#e4e4b0" stroke-width="1.25" fill="none"/><path d="M365.0 56.5 V11.1 H368.6 V56.5" stroke="#e4e4b0" stroke-width="1.25" fill="none"/><path d="M384.0 56.5 V11.1 H387.6 V56.5" stroke="#e4e4b0" stroke-width="1.25" fill="none"/><path d="M403.0 56.5 V11.1 H406.6 V56.5" stroke="#e4e4b0" stroke-width="1.25" fill="none"/><path d="M422.0 56.5 V11.1 H425.6 V56.5" stroke="#e4e4b0" stroke-width="1.25" fill="none"/><path d="M441.0 56.5 V11.1 H444.6 V56.5" stroke="#e4e4b0" stroke-width="1.25" fill="none"/><path d="M460.0 56.5 V11.1 H463.6 V56.5" stroke="#e4e4b0" stroke-width="1.25" fill="none"/><path d="M479.0 56.5 V11.1 H482.6 V56.5" stroke="#e4e4b0" stroke-width="1.25" fill="none"/><path d="M498.0 56.5 V11.1 H501.6 V56.5" stroke="#e4e4b0" stroke-width="1.25" fill="none"/><path d="M517.0 56.5 V11.1 H520.6 V56.5" stroke="#e4e4b0" stroke-width="1.25" fill="none"/>
<rect x="0" y="0" width="40.0" height="142.0" fill="#787a7a" opacity="0.75"/>
<rect x="495.5" y="0" width="32.5" height="142.0" fill="#787a7a" opacity="0.75"/>
<path d="M30.0 56.0 H40.0 V84.5 H30.0 Z M30.0 56.0 L40.0 70.5 L30.0 84.5" stroke="#d8d8d8" stroke-width="0.9" fill="rgba(200,200,200,0.25)"/>
<path d="M505.5 56.0 H495.5 V84.5 H505.5 Z M505.5 56.0 L495.5 70.5 L505.5 84.5" stroke="#d8d8d8" stroke-width="0.9" fill="rgba(200,200,200,0.25)"/>
</svg>
<div class="a" style="left:784.5px;top:284.3px;width:455.5px;height:2px;background:#10108c;"></div>
<div class="a" style="left:784.5px;top:286.3px;width:455.5px;height:1.6px;background:#7070f0;"></div>
<div class="a" style="left:784.5px;top:426px;width:455.5px;height:4px;background:#d840c8;"></div>
<span class="t" id="t115" style="top:280.05px;font-size:5px;line-height:6.5px;color:#555;left:787px;transform-origin:0 50%;transform:scaleX(1.0000);">T</span>
<span class="t" id="t116" style="top:430.05px;font-size:5px;line-height:6.5px;color:#a4a;left:787px;transform-origin:0 50%;transform:scaleX(1.0000);">T</span>
<div class="a" style="left:750.5px;top:293.5px;width:55.5px;height:17.5px;background:rgba(30,30,30,0.8);"></div>
<span class="t" id="t117" style="top:293.3px;font-size:7.5px;line-height:9.8px;color:#f4f4f4;left:751.5px;transform-origin:0 50%;transform:scaleX(0.9636);font-family:'Liberation Sans',sans-serif;text-shadow:0 0 0.5px #fff;">MR: -27.96 dBm</span>
<span class="t" id="t118" style="top:301.5px;font-size:7.5px;line-height:9.8px;color:#f4f4f4;left:751.5px;transform-origin:0 50%;transform:scaleX(0.9677);font-family:'Liberation Sans',sans-serif;text-shadow:0 0 0.5px #fff;">2.882 ms</span>
<svg class="a" style="left:1219.5px;top:289px;" width="11" height="11" viewBox="0 0 11 11"><path d="M5.5 0.5 L10.5 5.5 L5.5 10.5 L0.5 5.5 Z" fill="#fff"/></svg>
<span class="t" id="t119" style="top:298.55px;font-size:7px;line-height:9.1px;color:#fff;left:1225.8px;transform-origin:50% 50%;transform:translateX(-50%) scaleX(1.0000);font-weight:bold;font-family:'Liberation Sans',sans-serif;">MR</span>
<svg class="a" style="left:889px;top:355px;" width="9" height="14" viewBox="0 0 9 14"><path d="M1 1 V11 L3.5 8.8 L5.3 12.8 L6.8 12.1 L5 8.2 H8.3 Z" fill="#fff" stroke="#222" stroke-width="0.7"/></svg>
<div class="a" style="left:643.5px;top:451.5px;width:635.0px;height:2px;background:#dbe8ec;"></div>
<div class="a" style="left:643.5px;top:453px;width:635.0px;height:15.5px;background:linear-gradient(#c2cfcd 0%,#cad7d5 50%,#d5e2e1 100%);"></div>
<span class="t" id="t120" style="top:453.3px;font-size:11px;line-height:14.3px;color:#f3f9fa;left:659.8px;transform-origin:0 50%;transform:scaleX(0.8611);font-weight:bold;font-family:'Liberation Serif',serif;letter-spacing:0.1px;text-shadow:0 0 0.7px #fff;">DPX Spectrum</span>
<div class="a" style="left:1254.7px;top:455px;width:11px;height:11px;border:1px solid rgba(232,242,242,0.7);box-sizing:border-box;border-radius:2px;"><div class="a" style="left:2px;top:2px;width:5px;height:2px;background:rgba(236,244,244,0.7)"></div></div>
<div class="a" style="left:1268.7px;top:455px;width:11px;height:11px;border:1px solid rgba(232,242,242,0.7);box-sizing:border-box;border-radius:2px;"><svg width="9" height="9" viewBox="0 0 9 9" style="position:absolute;left:0;top:0"><path d="M2 2 L7 7 M7 2 L2 7" stroke="rgba(236,244,244,0.7)" stroke-width="1.2"/></svg></div>
<div class="a" style="left:646px;top:456.5px;width:10px;height:10px;background:#103878;"><div class="a" style="left:1px;top:1px;width:4px;height:8px;background:#2a78d8"></div></div>
<svg class="a" style="left:710px;top:478px;" width="8" height="5" viewBox="0 0 8 5"><path d="M0.8 0.8 L4 4 L7.2 0.8" stroke="#8a9498" stroke-width="1" fill="none"/></svg>
<span class="t" id="t121" style="top:476.75px;font-size:8.5px;line-height:11.1px;color:#2a2f33;left:721.5px;transform-origin:0 50%;transform:scaleX(0.9600);">Trace1</span>
<div class="a" style="left:781px;top:476px;width:9px;height:9px;background:#f4fcff;border:1px solid #7fb0cf;box-sizing:border-box;border-radius:1.5px;"><svg width="9" height="9" viewBox="0 0 9 9" style="position:absolute;left:-1px;top:-1px"><path d="M2 4.6 L3.8 6.4 L7 2.6" stroke="#2b6ea8" stroke-width="1.1" fill="none"/></svg></div>
<span class="t" id="t122" style="top:476.25px;font-size:8.5px;line-height:11.1px;color:#2a2f33;left:792.5px;transform-origin:0 50%;transform:scaleX(0.9524);">Show</span>
<span class="t" id="t123" style="top:476.75px;font-size:8.5px;line-height:11.1px;color:#2a2f33;left:820.5px;transform-origin:0 50%;transform:scaleX(0.9091);">+Peak Normal</span>
<div class="a" style="left:1241px;top:474px;width:27px;height:14px;background:linear-gradient(#f6fdff,#e3f1f6);border:1px solid #8fb4cc;box-sizing:border-box;border-radius:2px;"></div>
<span class="t" id="t124" style="top:476.25px;font-size:8.5px;line-height:11.1px;color:#2a2f33;left:1254.5px;transform-origin:50% 50%;transform:translateX(-50%) scaleX(0.8500);">Clear</span>
<svg class="a" style="left:645px;top:489.5px;" width="7" height="7" viewBox="0 0 7 7"><circle cx="3.4" cy="3.8" r="2" fill="#4a4a4a"/><path d="M1.6 3.2 A2 2 0 0 1 4.6 2.2 L3.4 3.6 Z" fill="#e8eef0"/></svg>
<span class="t" id="t125" style="top:487.75px;font-size:8.5px;line-height:11.1px;color:#2a2f33;left:656px;transform-origin:0 50%;transform:scaleX(0.9200);">-20.00</span>
<div class="a" style="left:656.5px;top:501.5px;width:46px;height:13.5px;background:#f2fcff;border:1px solid #d3e3ea;box-sizing:border-box;"></div>
<div class="a" style="left:692.5px;top:502.5px;width:9px;height:11.5px;background:linear-gradient(#eaf6fd,#cfe6f4);border:1px solid #7fb4d8;box-sizing:border-box;border-radius:2px;"><svg width="7" height="9.5" viewBox="0 0 7 9.5" style="position:absolute;left:0;top:0"><path d="M1.5 3.25 L3.5 6.25 L5.5 3.25" stroke="#3b7fb5" stroke-width="1" fill="none"/></svg></div>
<span class="t" id="t126" style="top:503.5px;font-size:8.5px;line-height:11.1px;color:#2a2f33;left:659.5px;transform-origin:0 50%;transform:scaleX(0.9300);">dBm</span>
<svg class="a" style="left:645px;top:538px;" width="7" height="7" viewBox="0 0 7 7"><circle cx="3.4" cy="3.8" r="2" fill="#4a4a4a"/><path d="M1.6 3.2 A2 2 0 0 1 4.6 2.2 L3.4 3.6 Z" fill="#e8eef0"/></svg>
<span class="t" id="t127" style="top:531.25px;font-size:8.5px;line-height:11.1px;color:#2a2f33;left:653px;transform-origin:0 50%;transform:scaleX(0.9615);">dB/div:</span>
<span class="t" id="t128" style="top:541.75px;font-size:8.5px;line-height:11.1px;color:#2a2f33;left:656px;transform-origin:0 50%;transform:scaleX(0.9333);">10.0 dB</span>
<svg class="a" style="left:645px;top:566px;" width="7" height="7" viewBox="0 0 7 7"><circle cx="3.4" cy="3.8" r="2" fill="#4a4a4a"/><path d="M1.6 3.2 A2 2 0 0 1 4.6 2.2 L3.4 3.6 Z" fill="#e8eef0"/></svg>
<span class="t" id="t129" style="top:558.25px;font-size:8.5px;line-height:11.1px;color:#2a2f33;left:653px;transform-origin:0 50%;transform:scaleX(1.0000);">RBW:</span>
<span class="t" id="t130" style="top:568.75px;font-size:8.5px;line-height:11.1px;color:#2a2f33;left:657px;transform-origin:0 50%;transform:scaleX(0.9677);font-style:italic;">300 kHz</span>
<div class="a" style="left:647.5px;top:586px;width:56px;height:13.5px;background:#f2fcff;border:1px solid #d3e3ea;box-sizing:border-box;"></div>
<div class="a" style="left:693.5px;top:587px;width:9px;height:11.5px;background:linear-gradient(#eaf6fd,#cfe6f4);border:1px solid #7fb4d8;box-sizing:border-box;border-radius:2px;"><svg width="7" height="9.5" viewBox="0 0 7 9.5" style="position:absolute;left:0;top:0"><path d="M1.5 3.25 L3.5 6.25 L5.5 3.25" stroke="#3b7fb5" stroke-width="1" fill="none"/></svg></div>
<span class="t" id="t131" style="top:588.0px;font-size:8.5px;line-height:11.1px;color:#2a2f33;left:650.5px;transform-origin:0 50%;transform:scaleX(0.9300);">Spectrum</span>
<span class="t" id="t132" style="top:612.25px;font-size:8.5px;line-height:11.1px;color:#2a2f33;left:650px;transform-origin:0 50%;transform:scaleX(0.9268);">Segments:</span>
<div class="a" style="left:647.5px;top:627px;width:48px;height:14.5px;background:linear-gradient(#f6fdff,#e3f1f6);border:1px solid #8fb4cc;box-sizing:border-box;border-radius:2px;"></div>
<span class="t" id="t133" style="top:629.5px;font-size:8.5px;line-height:11.1px;color:#2a2f33;left:671.5px;transform-origin:50% 50%;transform:translateX(-50%) scaleX(0.9459);">Autoscale</span>
<svg class="a" style="left:740px;top:631px;" width="7" height="7" viewBox="0 0 7 7"><circle cx="3.4" cy="3.8" r="2" fill="#4a4a4a"/><path d="M1.6 3.2 A2 2 0 0 1 4.6 2.2 L3.4 3.6 Z" fill="#e8eef0"/></svg>
<span class="t" id="t134" style="top:629.25px;font-size:8.5px;line-height:11.1px;color:#2a2f33;left:751px;transform-origin:0 50%;transform:scaleX(0.8000);">CF</span>
<span class="t" id="t135" style="top:629.25px;font-size:8.5px;line-height:11.1px;color:#2a2f33;left:765px;transform-origin:0 50%;transform:scaleX(0.9500);">10.52 GHz</span>
<svg class="a" style="left:1183px;top:631px;" width="7" height="7" viewBox="0 0 7 7"><circle cx="3.4" cy="3.8" r="2" fill="#4a4a4a"/><path d="M1.6 3.2 A2 2 0 0 1 4.6 2.2 L3.4 3.6 Z" fill="#e8eef0"/></svg>
<span class="t" id="t136" style="top:629.25px;font-size:8.5px;line-height:11.1px;color:#2a2f33;left:1194px;transform-origin:0 50%;transform:scaleX(0.8947);">Span</span>
<span class="t" id="t137" style="top:629.25px;font-size:8.5px;line-height:11.1px;color:#2a2f33;left:1216px;transform-origin:0 50%;transform:scaleX(0.9512);">40.00 MHz</span>
<span class="t" id="t138" style="top:488.75px;font-size:8.5px;line-height:11.1px;color:#2a2f33;right:549.5px;transform-origin:100% 50%;transform:scaleX(0.9300);">-20.0</span>
<div class="a" style="left:734.5px;top:493.0px;width:2.5px;height:1px;background:#556;"></div>
<span class="t" id="t139" style="top:501.2px;font-size:8.5px;line-height:11.1px;color:#2a2f33;right:549.5px;transform-origin:100% 50%;transform:scaleX(0.9300);">-30.0</span>
<div class="a" style="left:734.5px;top:505.45px;width:2.5px;height:1px;background:#556;"></div>
<span class="t" id="t140" style="top:513.65px;font-size:8.5px;line-height:11.1px;color:#2a2f33;right:549.5px;transform-origin:100% 50%;transform:scaleX(0.9300);">-40.0</span>
<div class="a" style="left:734.5px;top:517.9px;width:2.5px;height:1px;background:#556;"></div>
<span class="t" id="t141" style="top:526.1px;font-size:8.5px;line-height:11.1px;color:#2a2f33;right:549.5px;transform-origin:100% 50%;transform:scaleX(0.9300);">-50.0</span>
<div class="a" style="left:734.5px;top:530.35px;width:2.5px;height:1px;background:#556;"></div>
<span class="t" id="t142" style="top:538.55px;font-size:8.5px;line-height:11.1px;color:#2a2f33;right:549.5px;transform-origin:100% 50%;transform:scaleX(0.9300);">-60.0</span>
<div class="a" style="left:734.5px;top:542.8px;width:2.5px;height:1px;background:#556;"></div>
<span class="t" id="t143" style="top:551.0px;font-size:8.5px;line-height:11.1px;color:#2a2f33;right:549.5px;transform-origin:100% 50%;transform:scaleX(0.9300);">-70.0</span>
<div class="a" style="left:734.5px;top:555.25px;width:2.5px;height:1px;background:#556;"></div>
<span class="t" id="t144" style="top:563.45px;font-size:8.5px;line-height:11.1px;color:#2a2f33;right:549.5px;transform-origin:100% 50%;transform:scaleX(0.9300);">-80.0</span>
<div class="a" style="left:734.5px;top:567.7px;width:2.5px;height:1px;background:#556;"></div>
<span class="t" id="t145" style="top:575.9px;font-size:8.5px;line-height:11.1px;color:#2a2f33;right:549.5px;transform-origin:100% 50%;transform:scaleX(0.9300);">-90.0</span>
<div class="a" style="left:734.5px;top:580.15px;width:2.5px;height:1px;background:#556;"></div>
<span class="t" id="t146" style="top:588.35px;font-size:8.5px;line-height:11.1px;color:#2a2f33;right:549.5px;transform-origin:100% 50%;transform:scaleX(0.9300);">-100.0</span>
<div class="a" style="left:734.5px;top:592.6px;width:2.5px;height:1px;background:#556;"></div>
<span class="t" id="t147" style="top:600.8px;font-size:8.5px;line-height:11.1px;color:#2a2f33;right:549.5px;transform-origin:100% 50%;transform:scaleX(0.9300);">-110.0</span>
<div class="a" style="left:734.5px;top:605.05px;width:2.5px;height:1px;background:#556;"></div>
<span class="t" id="t148" style="top:613.25px;font-size:8.5px;line-height:11.1px;color:#2a2f33;right:549.5px;transform-origin:100% 50%;transform:scaleX(0.9300);">-120.0</span>
<div class="a" style="left:734.5px;top:617.5px;width:2.5px;height:1px;background:#556;"></div>
<svg class="a" style="left:739.5px;top:490.5px;" width="528.0" height="129.0" viewBox="0 0 528.0 129.0"><defs>
<linearGradient id="dpx" gradientUnits="userSpaceOnUse" x1="0" x2="0" y1="0" y2="129.0">
<stop offset="0.5775" stop-color="#1a9878" stop-opacity="1"/><stop offset="0.5930" stop-color="#22b868" stop-opacity="1"/><stop offset="0.6085" stop-color="#30d83c" stop-opacity="1"/><stop offset="0.6279" stop-color="#70e028" stop-opacity="1"/><stop offset="0.6434" stop-color="#cce224" stop-opacity="1"/><stop offset="0.6589" stop-color="#ecc422" stop-opacity="1"/><stop offset="0.6729" stop-color="#ecb020" stop-opacity="1"/><stop offset="0.6860" stop-color="#eec422" stop-opacity="1"/><stop offset="0.7054" stop-color="#d4e424" stop-opacity="1"/><stop offset="0.7248" stop-color="#70e028" stop-opacity="1"/><stop offset="0.7442" stop-color="#28dc38" stop-opacity="1"/><stop offset="0.7829" stop-color="#1cd868" stop-opacity="1"/><stop offset="0.8101" stop-color="#1cccc0" stop-opacity="1"/><stop offset="0.8333" stop-color="#1ca8e8" stop-opacity="1"/><stop offset="0.8643" stop-color="#1878e0" stop-opacity="1"/><stop offset="0.8992" stop-color="#1044b8" stop-opacity="1"/><stop offset="0.9341" stop-color="#0a2070" stop-opacity="1"/><stop offset="0.9729" stop-color="#040c30" stop-opacity="1"/><stop offset="1.0000" stop-color="#01040f" stop-opacity="1"/>
</linearGradient>
<clipPath id="dc"><path d="M0.0 76.2 L1.5 75.8 L3.0 75.6 L4.5 74.8 L6.0 74.8 L7.5 76.6 L9.0 76.6 L10.5 75.9 L12.0 76.3 L13.5 76.4 L15.0 76.1 L16.5 75.7 L18.0 76.5 L19.5 74.7 L21.0 75.9 L22.5 76.7 L24.0 76.8 L25.5 75.6 L27.0 74.5 L28.5 76.8 L30.0 76.4 L31.5 76.4 L33.0 74.7 L34.5 75.2 L36.0 76.2 L37.5 76.1 L39.0 74.4 L40.5 75.8 L42.0 74.9 L43.5 76.4 L45.0 75.9 L46.5 76.9 L48.0 76.5 L49.5 75.8 L51.0 75.6 L52.5 76.4 L54.0 75.0 L55.5 76.7 L57.0 76.1 L58.5 76.9 L60.0 75.5 L61.5 75.9 L63.0 75.8 L64.5 73.8 L66.0 75.6 L67.5 75.5 L69.0 76.6 L70.5 76.4 L72.0 76.5 L73.5 75.7 L75.0 76.0 L76.5 76.6 L78.0 76.3 L79.5 76.6 L81.0 75.4 L82.5 75.6 L84.0 76.7 L85.5 74.0 L87.0 75.9 L88.5 76.7 L90.0 75.5 L91.5 73.5 L93.0 74.5 L94.5 76.3 L96.0 75.8 L97.5 75.5 L99.0 76.3 L100.5 74.9 L102.0 76.0 L103.5 73.7 L105.0 74.2 L106.5 75.8 L108.0 75.7 L109.5 75.9 L111.0 75.9 L112.5 75.2 L114.0 76.4 L115.5 75.9 L117.0 74.2 L118.5 75.9 L120.0 76.1 L121.5 75.2 L123.0 75.7 L124.5 73.9 L126.0 75.6 L127.5 75.4 L129.0 76.0 L130.5 74.2 L132.0 75.9 L133.5 74.2 L135.0 75.8 L136.5 75.1 L138.0 75.6 L139.5 75.0 L141.0 75.4 L142.5 74.9 L144.0 75.7 L145.5 76.3 L147.0 75.0 L148.5 75.2 L150.0 75.1 L151.5 75.0 L153.0 76.1 L154.5 75.3 L156.0 75.5 L157.5 75.3 L159.0 75.1 L160.5 75.5 L162.0 75.4 L163.5 74.8 L165.0 74.4 L166.5 75.9 L168.0 73.5 L169.5 75.1 L171.0 76.0 L172.5 75.9 L174.0 75.9 L175.5 74.4 L177.0 75.0 L178.5 75.3 L180.0 75.8 L181.5 74.9 L183.0 75.2 L184.5 75.4 L186.0 74.8 L187.5 75.0 L189.0 75.3 L190.5 75.5 L192.0 74.7 L193.5 75.0 L195.0 75.4 L196.5 75.7 L198.0 74.8 L199.5 73.0 L201.0 75.1 L202.5 74.9 L204.0 72.9 L205.5 74.9 L207.0 71.9 L208.5 74.5 L210.0 72.2 L211.5 75.8 L213.0 75.0 L214.5 75.1 L216.0 75.4 L217.5 74.8 L219.0 75.0 L220.5 75.3 L222.0 73.0 L223.5 74.4 L225.0 75.6 L226.5 75.7 L228.0 74.8 L229.5 75.0 L231.0 74.7 L232.5 75.4 L234.0 75.2 L235.5 74.4 L237.0 75.5 L238.5 74.5 L240.0 74.7 L241.5 75.7 L243.0 74.7 L244.5 75.0 L246.0 75.8 L247.5 75.4 L249.0 74.5 L250.5 75.0 L252.0 75.3 L253.5 75.2 L255.0 74.1 L256.5 75.7 L258.0 75.8 L259.5 75.2 L261.0 75.2 L262.5 75.8 L264.0 74.6 L265.5 75.3 L267.0 75.7 L268.5 74.7 L270.0 74.6 L271.5 75.6 L273.0 74.6 L274.5 74.7 L276.0 74.8 L277.5 75.3 L279.0 75.8 L280.5 75.9 L282.0 75.1 L283.5 75.2 L285.0 75.3 L286.5 75.8 L288.0 74.8 L289.5 75.4 L291.0 75.5 L292.5 73.8 L294.0 74.8 L295.5 75.1 L297.0 73.2 L298.5 74.9 L300.0 75.1 L301.5 75.7 L303.0 75.3 L304.5 75.3 L306.0 73.3 L307.5 74.1 L309.0 76.0 L310.5 75.4 L312.0 73.6 L313.5 75.9 L315.0 75.0 L316.5 75.7 L318.0 75.5 L319.5 76.2 L321.0 75.7 L322.5 75.1 L324.0 75.5 L325.5 75.5 L327.0 75.8 L328.5 75.2 L330.0 76.3 L331.5 75.4 L333.0 73.1 L334.5 75.7 L336.0 75.4 L337.5 76.3 L339.0 74.0 L340.5 75.8 L342.0 76.6 L343.5 76.7 L345.0 75.4 L346.5 75.3 L348.0 76.2 L349.5 76.2 L351.0 75.8 L352.5 75.7 L354.0 76.2 L355.5 75.7 L357.0 76.7 L358.5 76.2 L360.0 76.2 L361.5 76.4 L363.0 76.5 L364.5 76.2 L366.0 76.5 L367.5 75.7 L369.0 76.7 L370.5 75.8 L372.0 76.5 L373.5 75.9 L375.0 76.7 L376.5 77.0 L378.0 75.8 L379.5 74.0 L381.0 76.8 L382.5 73.5 L384.0 76.5 L385.5 76.6 L387.0 76.4 L388.5 76.1 L390.0 76.9 L391.5 76.6 L393.0 76.4 L394.5 77.2 L396.0 76.3 L397.5 76.8 L399.0 76.1 L400.5 76.7 L402.0 75.3 L403.5 77.2 L405.0 74.5 L406.5 77.3 L408.0 76.8 L409.5 76.2 L411.0 73.7 L412.5 76.3 L414.0 77.3 L415.5 76.7 L417.0 77.2 L418.5 77.3 L420.0 77.0 L421.5 77.3 L423.0 76.6 L424.5 76.6 L426.0 77.3 L427.5 76.3 L429.0 76.5 L430.5 77.2 L432.0 76.9 L433.5 77.5 L435.0 76.9 L436.5 76.9 L438.0 74.9 L439.5 77.1 L441.0 76.7 L442.5 77.7 L444.0 77.3 L445.5 77.3 L447.0 76.6 L448.5 76.9 L450.0 77.7 L451.5 76.9 L453.0 77.8 L454.5 74.2 L456.0 76.7 L457.5 77.5 L459.0 77.3 L460.5 77.0 L462.0 76.8 L463.5 77.0 L465.0 77.9 L466.5 77.5 L468.0 76.6 L469.5 77.9 L471.0 77.4 L472.5 78.0 L474.0 76.9 L475.5 76.7 L477.0 75.1 L478.5 76.7 L480.0 77.9 L481.5 76.8 L483.0 77.0 L484.5 77.6 L486.0 77.4 L487.5 77.1 L489.0 75.7 L490.5 76.8 L492.0 77.0 L493.5 77.2 L495.0 77.9 L496.5 77.2 L498.0 74.8 L499.5 78.0 L501.0 77.8 L502.5 78.1 L504.0 77.1 L505.5 77.5 L507.0 76.0 L508.5 77.1 L510.0 77.8 L511.5 77.3 L513.0 77.5 L514.5 77.2 L516.0 77.5 L517.5 77.2 L519.0 77.6 L520.5 78.0 L522.0 77.8 L523.5 77.1 L525.0 77.0 L526.5 78.1 L528.0 77.3 L528.0 129.0 L0 129.0 Z"/></clipPath>
<filter id="dn" x="0" y="0" width="100%" height="100%" color-interpolation-filters="sRGB">
<feTurbulence type="fractalNoise" baseFrequency="0.55" numOctaves="1" seed="4" result="n"/>
<feColorMatrix in="n" type="matrix" values="0 0 0 0 0.35  0 0 0 0 0.72  0 0 0 0 0.98  3.2 0 0 0 -1.55"/>
</filter>
<linearGradient id="nm" x1="0" x2="0" y1="0" y2="1"><stop offset="0.8023" stop-color="#fff" stop-opacity="0"/><stop offset="0.8566" stop-color="#fff" stop-opacity="0.55"/><stop offset="0.9109" stop-color="#fff" stop-opacity="0.9"/><stop offset="1.0000" stop-color="#fff" stop-opacity="0.75"/></linearGradient>
<mask id="nmask"><rect width="528.0" height="129.0" fill="url(#nm)"/></mask>
</defs>
<rect width="528.0" height="129.0" fill="#000"/>
<path d="M52.8 0 V129.0" stroke="#d4d4d4" stroke-width="0.8" opacity="0.8"/><path d="M105.6 0 V129.0" stroke="#d4d4d4" stroke-width="0.8" opacity="0.8"/><path d="M158.4 0 V129.0" stroke="#d4d4d4" stroke-width="0.8" opacity="0.8"/><path d="M211.2 0 V129.0" stroke="#d4d4d4" stroke-width="0.8" opacity="0.8"/><path d="M264.0 0 V129.0" stroke="#d4d4d4" stroke-width="0.8" opacity="0.8"/><path d="M316.8 0 V129.0" stroke="#d4d4d4" stroke-width="0.8" opacity="0.8"/><path d="M369.6 0 V129.0" stroke="#d4d4d4" stroke-width="0.8" opacity="0.8"/><path d="M422.4 0 V129.0" stroke="#d4d4d4" stroke-width="0.8" opacity="0.8"/><path d="M475.2 0 V129.0" stroke="#d4d4d4" stroke-width="0.8" opacity="0.8"/><path d="M0 12.9 H528.0" stroke="#d4d4d4" stroke-width="0.8" opacity="0.8"/><path d="M0 25.8 H528.0" stroke="#d4d4d4" stroke-width="0.8" opacity="0.8"/><path d="M0 38.7 H528.0" stroke="#d4d4d4" stroke-width="0.8" opacity="0.8"/><path d="M0 51.6 H528.0" stroke="#d4d4d4" stroke-width="0.8" opacity="0.8"/><path d="M0 64.5 H528.0" stroke="#d4d4d4" stroke-width="0.8" opacity="0.8"/><path d="M0 77.4 H528.0" stroke="#d4d4d4" stroke-width="0.8" opacity="0.8"/><path d="M0 90.3 H528.0" stroke="#d4d4d4" stroke-width="0.8" opacity="0.8"/><path d="M0 103.2 H528.0" stroke="#d4d4d4" stroke-width="0.8" opacity="0.8"/><path d="M0 116.1 H528.0" stroke="#d4d4d4" stroke-width="0.8" opacity="0.8"/>
<g clip-path="url(#dc)"><rect x="-5" y="-5" width="538.0" height="139.0" fill="url(#dpx)" transform="skewY(0.2)"/>
<g mask="url(#nmask)"><rect width="528.0" height="129.0" filter="url(#dn)"/></g>
</g>
<path d="M0.0 76.2 L1.5 75.8 L3.0 75.6 L4.5 74.8 L6.0 74.8 L7.5 76.6 L9.0 76.6 L10.5 75.9 L12.0 76.3 L13.5 76.4 L15.0 76.1 L16.5 75.7 L18.0 76.5 L19.5 74.7 L21.0 75.9 L22.5 76.7 L24.0 76.8 L25.5 75.6 L27.0 74.5 L28.5 76.8 L30.0 76.4 L31.5 76.4 L33.0 74.7 L34.5 75.2 L36.0 76.2 L37.5 76.1 L39.0 74.4 L40.5 75.8 L42.0 74.9 L43.5 76.4 L45.0 75.9 L46.5 76.9 L48.0 76.5 L49.5 75.8 L51.0 75.6 L52.5 76.4 L54.0 75.0 L55.5 76.7 L57.0 76.1 L58.5 76.9 L60.0 75.5 L61.5 75.9 L63.0 75.8 L64.5 73.8 L66.0 75.6 L67.5 75.5 L69.0 76.6 L70.5 76.4 L72.0 76.5 L73.5 75.7 L75.0 76.0 L76.5 76.6 L78.0 76.3 L79.5 76.6 L81.0 75.4 L82.5 75.6 L84.0 76.7 L85.5 74.0 L87.0 75.9 L88.5 76.7 L90.0 75.5 L91.5 73.5 L93.0 74.5 L94.5 76.3 L96.0 75.8 L97.5 75.5 L99.0 76.3 L100.5 74.9 L102.0 76.0 L103.5 73.7 L105.0 74.2 L106.5 75.8 L108.0 75.7 L109.5 75.9 L111.0 75.9 L112.5 75.2 L114.0 76.4 L115.5 75.9 L117.0 74.2 L118.5 75.9 L120.0 76.1 L121.5 75.2 L123.0 75.7 L124.5 73.9 L126.0 75.6 L127.5 75.4 L129.0 76.0 L130.5 74.2 L132.0 75.9 L133.5 74.2 L135.0 75.8 L136.5 75.1 L138.0 75.6 L139.5 75.0 L141.0 75.4 L142.5 74.9 L144.0 75.7 L145.5 76.3 L147.0 75.0 L148.5 75.2 L150.0 75.1 L151.5 75.0 L153.0 76.1 L154.5 75.3 L156.0 75.5 L157.5 75.3 L159.0 75.1 L160.5 75.5 L162.0 75.4 L163.5 74.8 L165.0 74.4 L166.5 75.9 L168.0 73.5 L169.5 75.1 L171.0 76.0 L172.5 75.9 L174.0 75.9 L175.5 74.4 L177.0 75.0 L178.5 75.3 L180.0 75.8 L181.5 74.9 L183.0 75.2 L184.5 75.4 L186.0 74.8 L187.5 75.0 L189.0 75.3 L190.5 75.5 L192.0 74.7 L193.5 75.0 L195.0 75.4 L196.5 75.7 L198.0 74.8 L199.5 73.0 L201.0 75.1 L202.5 74.9 L204.0 72.9 L205.5 74.9 L207.0 71.9 L208.5 74.5 L210.0 72.2 L211.5 75.8 L213.0 75.0 L214.5 75.1 L216.0 75.4 L217.5 74.8 L219.0 75.0 L220.5 75.3 L222.0 73.0 L223.5 74.4 L225.0 75.6 L226.5 75.7 L228.0 74.8 L229.5 75.0 L231.0 74.7 L232.5 75.4 L234.0 75.2 L235.5 74.4 L237.0 75.5 L238.5 74.5 L240.0 74.7 L241.5 75.7 L243.0 74.7 L244.5 75.0 L246.0 75.8 L247.5 75.4 L249.0 74.5 L250.5 75.0 L252.0 75.3 L253.5 75.2 L255.0 74.1 L256.5 75.7 L258.0 75.8 L259.5 75.2 L261.0 75.2 L262.5 75.8 L264.0 74.6 L265.5 75.3 L267.0 75.7 L268.5 74.7 L270.0 74.6 L271.5 75.6 L273.0 74.6 L274.5 74.7 L276.0 74.8 L277.5 75.3 L279.0 75.8 L280.5 75.9 L282.0 75.1 L283.5 75.2 L285.0 75.3 L286.5 75.8 L288.0 74.8 L289.5 75.4 L291.0 75.5 L292.5 73.8 L294.0 74.8 L295.5 75.1 L297.0 73.2 L298.5 74.9 L300.0 75.1 L301.5 75.7 L303.0 75.3 L304.5 75.3 L306.0 73.3 L307.5 74.1 L309.0 76.0 L310.5 75.4 L312.0 73.6 L313.5 75.9 L315.0 75.0 L316.5 75.7 L318.0 75.5 L319.5 76.2 L321.0 75.7 L322.5 75.1 L324.0 75.5 L325.5 75.5 L327.0 75.8 L328.5 75.2 L330.0 76.3 L331.5 75.4 L333.0 73.1 L334.5 75.7 L336.0 75.4 L337.5 76.3 L339.0 74.0 L340.5 75.8 L342.0 76.6 L343.5 76.7 L345.0 75.4 L346.5 75.3 L348.0 76.2 L349.5 76.2 L351.0 75.8 L352.5 75.7 L354.0 76.2 L355.5 75.7 L357.0 76.7 L358.5 76.2 L360.0 76.2 L361.5 76.4 L363.0 76.5 L364.5 76.2 L366.0 76.5 L367.5 75.7 L369.0 76.7 L370.5 75.8 L372.0 76.5 L373.5 75.9 L375.0 76.7 L376.5 77.0 L378.0 75.8 L379.5 74.0 L381.0 76.8 L382.5 73.5 L384.0 76.5 L385.5 76.6 L387.0 76.4 L388.5 76.1 L390.0 76.9 L391.5 76.6 L393.0 76.4 L394.5 77.2 L396.0 76.3 L397.5 76.8 L399.0 76.1 L400.5 76.7 L402.0 75.3 L403.5 77.2 L405.0 74.5 L406.5 77.3 L408.0 76.8 L409.5 76.2 L411.0 73.7 L412.5 76.3 L414.0 77.3 L415.5 76.7 L417.0 77.2 L418.5 77.3 L420.0 77.0 L421.5 77.3 L423.0 76.6 L424.5 76.6 L426.0 77.3 L427.5 76.3 L429.0 76.5 L430.5 77.2 L432.0 76.9 L433.5 77.5 L435.0 76.9 L436.5 76.9 L438.0 74.9 L439.5 77.1 L441.0 76.7 L442.5 77.7 L444.0 77.3 L445.5 77.3 L447.0 76.6 L448.5 76.9 L450.0 77.7 L451.5 76.9 L453.0 77.8 L454.5 74.2 L456.0 76.7 L457.5 77.5 L459.0 77.3 L460.5 77.0 L462.0 76.8 L463.5 77.0 L465.0 77.9 L466.5 77.5 L468.0 76.6 L469.5 77.9 L471.0 77.4 L472.5 78.0 L474.0 76.9 L475.5 76.7 L477.0 75.1 L478.5 76.7 L480.0 77.9 L481.5 76.8 L483.0 77.0 L484.5 77.6 L486.0 77.4 L487.5 77.1 L489.0 75.7 L490.5 76.8 L492.0 77.0 L493.5 77.2 L495.0 77.9 L496.5 77.2 L498.0 74.8 L499.5 78.0 L501.0 77.8 L502.5 78.1 L504.0 77.1 L505.5 77.5 L507.0 76.0 L508.5 77.1 L510.0 77.8 L511.5 77.3 L513.0 77.5 L514.5 77.2 L516.0 77.5 L517.5 77.2 L519.0 77.6 L520.5 78.0 L522.0 77.8 L523.5 77.1 L525.0 77.0 L526.5 78.1 L528.0 77.3" stroke="#b4ece4" stroke-width="1.1" fill="none" stroke-linejoin="round"/>
<g opacity="0.22"><path d="M52.8 0 V129.0" stroke="#d4d4d4" stroke-width="0.8" opacity="0.8"/><path d="M105.6 0 V129.0" stroke="#d4d4d4" stroke-width="0.8" opacity="0.8"/><path d="M158.4 0 V129.0" stroke="#d4d4d4" stroke-width="0.8" opacity="0.8"/><path d="M211.2 0 V129.0" stroke="#d4d4d4" stroke-width="0.8" opacity="0.8"/><path d="M264.0 0 V129.0" stroke="#d4d4d4" stroke-width="0.8" opacity="0.8"/><path d="M316.8 0 V129.0" stroke="#d4d4d4" stroke-width="0.8" opacity="0.8"/><path d="M369.6 0 V129.0" stroke="#d4d4d4" stroke-width="0.8" opacity="0.8"/><path d="M422.4 0 V129.0" stroke="#d4d4d4" stroke-width="0.8" opacity="0.8"/><path d="M475.2 0 V129.0" stroke="#d4d4d4" stroke-width="0.8" opacity="0.8"/><path d="M0 12.9 H528.0" stroke="#d4d4d4" stroke-width="0.8" opacity="0.8"/><path d="M0 25.8 H528.0" stroke="#d4d4d4" stroke-width="0.8" opacity="0.8"/><path d="M0 38.7 H528.0" stroke="#d4d4d4" stroke-width="0.8" opacity="0.8"/><path d="M0 51.6 H528.0" stroke="#d4d4d4" stroke-width="0.8" opacity="0.8"/><path d="M0 64.5 H528.0" stroke="#d4d4d4" stroke-width="0.8" opacity="0.8"/><path d="M0 77.4 H528.0" stroke="#d4d4d4" stroke-width="0.8" opacity="0.8"/><path d="M0 90.3 H528.0" stroke="#d4d4d4" stroke-width="0.8" opacity="0.8"/><path d="M0 103.2 H528.0" stroke="#d4d4d4" stroke-width="0.8" opacity="0.8"/><path d="M0 116.1 H528.0" stroke="#d4d4d4" stroke-width="0.8" opacity="0.8"/></g>
<path d="M262.0 123.0 L264.5 127.0 L267.0 123.0" stroke="#ddd" stroke-width="0.9" fill="none"/>
</svg>
<span class="t" id="t149" style="top:496.4px;font-size:7.5px;line-height:9.8px;color:#f4f4f4;left:747px;transform-origin:0 50%;transform:scaleX(0.9636);font-family:'Liberation Sans',sans-serif;text-shadow:0 0 0.5px #fff;">MR: -76.37 dBm</span>
<span class="t" id="t150" style="top:504.5px;font-size:7.5px;line-height:9.8px;color:#f4f4f4;left:747px;transform-origin:0 50%;transform:scaleX(0.9792);font-family:'Liberation Sans',sans-serif;text-shadow:0 0 0.5px #fff;">10.51815 GHz</span>
<span class="t" id="t151" style="top:545.85px;font-size:7px;line-height:9.1px;color:#fff;left:999px;transform-origin:50% 50%;transform:translateX(-50%) scaleX(1.0000);font-weight:bold;font-family:'Liberation Sans',sans-serif;">MR</span>
<svg class="a" style="left:992.5px;top:554px;" width="11" height="11" viewBox="0 0 11 11"><path d="M5.5 0.5 L10.5 5.5 L5.5 10.5 L0.5 5.5 Z" fill="#fff"/></svg>
<div class="a" style="left:643.5px;top:644.5px;width:635.0px;height:2px;background:#c5dbe8;"></div>
<div class="a" style="left:0px;top:646.5px;width:1280px;height:46px;background:#eefbff;"></div>
<div class="a" style="left:0px;top:645.5px;width:1280px;height:1px;background:#bcd6e6;"></div>
<span class="t" id="t152" style="top:650.95px;font-size:10.5px;line-height:13.7px;color:#2a2f33;left:3px;transform-origin:0 50%;transform:scaleX(0.9211);">Markers</span>
<div class="a" style="left:77px;top:649px;width:16px;height:16.5px;background:#f3fcff;border:1px solid #dbe7ec;box-sizing:border-box;"><svg width="14" height="14" viewBox="0 0 14 14" style="position:absolute;left:0;top:0"><path d="M4.5 6 L7.3 8.8 L10 6" stroke="#7d878c" stroke-width="1" fill="none"/></svg></div>
<span class="t" id="t153" style="top:650.95px;font-size:10.5px;line-height:13.7px;color:#2a2f33;left:98px;transform-origin:0 50%;transform:scaleX(0.9333);">MR</span>
<div class="a" style="left:503px;top:649px;width:54px;height:16.5px;background:linear-gradient(#f6fdff,#e4f2f8);border:1px solid #8fb4cc;box-sizing:border-box;border-radius:2px;"></div>
<span class="t" id="t154" style="top:651.55px;font-size:10px;line-height:13.0px;color:#2a2f33;left:530.0px;transform-origin:50% 50%;transform:translateX(-50%) scaleX(1.0238);">To Center</span>
<div class="a" style="left:564px;top:649px;width:31px;height:16.5px;background:linear-gradient(#f6fdff,#e4f2f8);border:1px solid #8fb4cc;box-sizing:border-box;border-radius:2px;"></div>
<span class="t" id="t155" style="top:651.55px;font-size:10px;line-height:13.0px;color:#2a2f33;left:579.5px;transform-origin:50% 50%;transform:translateX(-50%) scaleX(1.0000);">Peak</span>
<div class="a" style="left:599px;top:649px;width:19px;height:16.5px;background:linear-gradient(#f6fdff,#e4f2f8);border:1px solid #8fb4cc;box-sizing:border-box;border-radius:2px;"><svg width="17" height="15" viewBox="0 0 17 15" style="position:absolute;left:0;top:0"><path d="M2.5 7.5 L8 2.5 V5.3 H14 V9.7 H8 V12.5 Z" stroke="#222" stroke-width="1.1" fill="#fafeff" stroke-linejoin="miter"/></svg></div>
<div class="a" style="left:623.5px;top:649px;width:19px;height:16.5px;background:linear-gradient(#f6fdff,#e4f2f8);border:1px solid #8fb4cc;box-sizing:border-box;border-radius:2px;"><svg width="17" height="15" viewBox="0 0 17 15" style="position:absolute;left:0;top:0"><path d="M14.5 7.5 L9 2.5 V5.3 H3 V9.7 H9 V12.5 Z" stroke="#222" stroke-width="1.1" fill="#fafeff" stroke-linejoin="miter"/></svg></div>
<div class="a" style="left:648px;top:649px;width:19px;height:16.5px;background:linear-gradient(#f6fdff,#e4f2f8);border:1px solid #8fb4cc;box-sizing:border-box;border-radius:2px;"><svg width="17" height="15" viewBox="0 0 17 15" style="position:absolute;left:0;top:0"><path d="M8.5 13 L3.5 7.5 H6.3 V2 H10.7 V7.5 H13.5 Z" stroke="#222" stroke-width="1.1" fill="#fafeff" stroke-linejoin="miter"/></svg></div>
<div class="a" style="left:672px;top:649px;width:19px;height:16.5px;background:linear-gradient(#f6fdff,#e4f2f8);border:1px solid #8fb4cc;box-sizing:border-box;border-radius:2px;"><svg width="17" height="15" viewBox="0 0 17 15" style="position:absolute;left:0;top:0"><path d="M8.5 2 L3.5 7.5 H6.3 V13 H10.7 V7.5 H13.5 Z" stroke="#222" stroke-width="1.1" fill="#fafeff" stroke-linejoin="miter"/></svg></div>
<div class="a" style="left:868px;top:649px;width:74px;height:16px;background:#f3fcff;border:1px solid #dbe7ec;box-sizing:border-box;"></div>
<span class="t" id="t156" style="top:650.95px;font-size:10.5px;line-height:13.7px;color:#2a2f33;left:871px;transform-origin:0 50%;transform:scaleX(0.9130);">Time</span>
<div class="a" style="left:932px;top:650px;width:9px;height:14px;background:linear-gradient(#eaf6fd,#cfe6f4);border:1px solid #7fb4d8;box-sizing:border-box;border-radius:2px;"><svg width="7" height="12" viewBox="0 0 7 12" style="position:absolute;left:0;top:0"><path d="M1.3 4.8 L3.5 7.2 L5.7 4.8" stroke="#3b7fb5" stroke-width="1" fill="none"/></svg></div>
<div class="a" style="left:947px;top:649px;width:93px;height:16px;background:#f3fcff;border:1px solid #dbe7ec;box-sizing:border-box;"></div>
<div class="a" style="left:949px;top:651px;width:42px;height:12px;background:#2f7de0;"></div>
<span class="t" id="t157" style="top:650.95px;font-size:10.5px;line-height:13.7px;color:#fff;left:950px;transform-origin:0 50%;transform:scaleX(0.9091);">2.882 ms</span>
<div class="a" style="left:1183px;top:649px;width:34px;height:16.5px;background:linear-gradient(#f6fdff,#e4f2f8);border:1px solid #8fb4cc;box-sizing:border-box;border-radius:2px;"></div>
<span class="t" id="t158" style="top:651.55px;font-size:10px;line-height:13.0px;color:#2a2f33;left:1200.0px;transform-origin:50% 50%;transform:translateX(-50%) scaleX(1.0000);">Table</span>
<div class="a" style="left:1221px;top:649px;width:36px;height:16.5px;background:linear-gradient(#f6fdff,#e4f2f8);border:1px solid #8fb4cc;box-sizing:border-box;border-radius:2px;"></div>
<span class="t" id="t159" style="top:651.55px;font-size:10px;line-height:13.0px;color:#2a2f33;left:1239.0px;transform-origin:50% 50%;transform:translateX(-50%) scaleX(0.9310);">Define</span>
<div class="a" style="left:1261px;top:649px;width:18px;height:16.5px;background:linear-gradient(#f6fdff,#e4f2f8);border:1px solid #8fb4cc;box-sizing:border-box;border-radius:2px;"><svg width="16" height="15" viewBox="0 0 16 15" style="position:absolute;left:0;top:0"><path d="M4.5 3.5 L11.5 10.5 M11.5 3.5 L4.5 10.5" stroke="#111" stroke-width="1.6"/></svg></div>
<span class="t" id="t160" style="top:674.95px;font-size:10.5px;line-height:13.7px;color:#2a2f33;left:3px;transform-origin:0 50%;transform:scaleX(0.9016);">Spectrogram</span>
<span class="t" id="t161" style="top:674.95px;font-size:10.5px;line-height:13.7px;color:#2a2f33;left:77px;transform-origin:0 50%;transform:scaleX(0.9388);">Frequency</span>
<div class="a" style="left:126.5px;top:672.5px;width:62px;height:16px;background:#f3fcff;border:1px solid #dfe9ee;box-sizing:border-box;"></div>
<span class="t" id="t162" style="top:675.25px;font-size:10.5px;line-height:13.7px;color:#2a2f33;left:129.5px;transform-origin:0 50%;transform:scaleX(0.9344);">10.5186 GHz</span>
<span class="t" id="t163" style="top:674.95px;font-size:10.5px;line-height:13.7px;color:#2a2f33;left:411px;transform-origin:0 50%;transform:scaleX(0.9429);">Ref Lev</span>
<div class="a" style="left:448.5px;top:672.5px;width:63px;height:16px;background:#f3fcff;border:1px solid #dfe9ee;box-sizing:border-box;"></div>
<span class="t" id="t164" style="top:675.25px;font-size:10.5px;line-height:13.7px;color:#2a2f33;left:451.5px;transform-origin:0 50%;transform:scaleX(0.9455);">-20.00 dBm</span>
<span class="t" id="t165" style="top:674.95px;font-size:10.5px;line-height:13.7px;color:#2a2f33;left:746px;transform-origin:0 50%;transform:scaleX(0.8750);">Span</span>
<div class="a" style="left:771px;top:672.5px;width:63px;height:16px;background:#f3fcff;border:1px solid #dfe9ee;box-sizing:border-box;"></div>
<span class="t" id="t166" style="top:675.25px;font-size:10.5px;line-height:13.7px;color:#2a2f33;left:774px;transform-origin:0 50%;transform:scaleX(0.9600);">40.00 MHz</span>
<span class="t" id="t167" style="top:674.95px;font-size:10.5px;line-height:13.7px;color:#2a2f33;left:1054px;transform-origin:0 50%;transform:scaleX(1.0000);">Res BW</span>
<div class="a" style="left:1093px;top:672.5px;width:63px;height:16px;background:#f3fcff;border:1px solid #dfe9ee;box-sizing:border-box;"></div>
<span class="t" id="t168" style="top:675.25px;font-size:10.5px;line-height:13.7px;color:#2a2f33;left:1096px;transform-origin:0 50%;transform:scaleX(0.9231);font-style:italic;">300 kHz</span>
<div class="a" style="left:1180px;top:672.5px;width:41px;height:16.5px;background:linear-gradient(#f6fdff,#e4f2f8);border:1px solid #8fb4cc;box-sizing:border-box;border-radius:2px;"></div>
<span class="t" id="t169" style="top:675.05px;font-size:10px;line-height:13.0px;color:#2a2f33;left:1200.5px;transform-origin:50% 50%;transform:translateX(-50%) scaleX(0.9722);">Markers</span>
<div class="a" style="left:1224px;top:672.5px;width:35px;height:16.5px;background:linear-gradient(#f6fdff,#e4f2f8);border:1px solid #8fb4cc;box-sizing:border-box;border-radius:2px;"></div>
<span class="t" id="t170" style="top:675.05px;font-size:10px;line-height:13.0px;color:#2a2f33;left:1241.5px;transform-origin:50% 50%;transform:translateX(-50%) scaleX(1.0357);">Traces</span>
<div class="a" style="left:1261px;top:672.5px;width:18px;height:16.5px;background:linear-gradient(#f6fdff,#e4f2f8);border:1px solid #8fb4cc;box-sizing:border-box;border-radius:2px;"></div>
<svg class="a" style="left:1262px;top:673px;" width="16" height="16" viewBox="0 0 17 17"><g transform="translate(8.5,8.5)"><rect x="-1.9" y="-8.3" width="3.8" height="4" rx="0.7" transform="rotate(0)" fill="#1a1a1a"/><rect x="-1.9" y="-8.3" width="3.8" height="4" rx="0.7" transform="rotate(45)" fill="#1a1a1a"/><rect x="-1.9" y="-8.3" width="3.8" height="4" rx="0.7" transform="rotate(90)" fill="#1a1a1a"/><rect x="-1.9" y="-8.3" width="3.8" height="4" rx="0.7" transform="rotate(135)" fill="#1a1a1a"/><rect x="-1.9" y="-8.3" width="3.8" height="4" rx="0.7" transform="rotate(180)" fill="#1a1a1a"/><rect x="-1.9" y="-8.3" width="3.8" height="4" rx="0.7" transform="rotate(225)" fill="#1a1a1a"/><rect x="-1.9" y="-8.3" width="3.8" height="4" rx="0.7" transform="rotate(270)" fill="#1a1a1a"/><rect x="-1.9" y="-8.3" width="3.8" height="4" rx="0.7" transform="rotate(315)" fill="#1a1a1a"/><circle r="5.7" fill="#1a1a1a"/><circle r="3.3" fill="#f2fcff"/></g></svg>
<div class="a" style="left:0px;top:692px;width:1280px;height:17px;background:#edfaff;"></div>
<div class="a" style="left:0px;top:691.5px;width:1280px;height:1.2px;background:#a9c9de;"></div>
<div class="a" style="left:65px;top:693.5px;width:1px;height:15px;background:#c9dbe4;"></div>
<div class="a" style="left:251px;top:693.5px;width:1px;height:15px;background:#c9dbe4;"></div>
<div class="a" style="left:296px;top:693.5px;width:1px;height:15px;background:#c9dbe4;"></div>
<div class="a" style="left:367px;top:693.5px;width:1px;height:15px;background:#c9dbe4;"></div>
<div class="a" style="left:414px;top:693.5px;width:1px;height:15px;background:#c9dbe4;"></div>
<div class="a" style="left:467px;top:693.5px;width:1px;height:15px;background:#c9dbe4;"></div>
<div class="a" style="left:520px;top:693.5px;width:1px;height:15px;background:#c9dbe4;"></div>
<div class="a" style="left:556px;top:693.5px;width:1px;height:15px;background:#c9dbe4;"></div>
<div class="a" style="left:1px;top:693px;width:1px;height:16px;background:#b9cfda;"></div>
<span class="t" id="t171" style="top:698.2px;font-size:8px;line-height:10.4px;color:#2a2f33;left:5.5px;transform-origin:0 50%;transform:scaleX(0.9667);">Stopped</span>
<span class="t" id="t172" style="top:698.2px;font-size:8px;line-height:10.4px;color:#2a2f33;left:69.5px;transform-origin:0 50%;transform:scaleX(0.9739);">Acq BW: 40.00 MHz, Acq Length: 3.480 ms</span>
<span class="t" id="t173" style="top:698.2px;font-size:8px;line-height:10.4px;color:#2a2f33;left:256px;transform-origin:0 50%;transform:scaleX(1.0000);">Real Time</span>
<span class="t" id="t174" style="top:698.2px;font-size:8px;line-height:10.4px;color:#2a2f33;left:300.5px;transform-origin:0 50%;transform:scaleX(1.0000);">Power</span>
<span class="t" id="t175" style="top:698.2px;font-size:8px;line-height:10.4px;color:#2a2f33;left:371px;transform-origin:0 50%;transform:scaleX(0.9615);">Ref: Int</span>
<span class="t" id="t176" style="top:698.2px;font-size:8px;line-height:10.4px;color:#2a2f33;left:418px;transform-origin:0 50%;transform:scaleX(0.9556);">Atten: 25 dB</span>
<span class="t" id="t177" style="top:698.2px;font-size:8px;line-height:10.4px;color:#2a2f33;left:471.5px;transform-origin:0 50%;transform:scaleX(1.0000);">Preamp: On</span>
<span class="t" id="t178" style="top:698.2px;font-size:8px;line-height:10.4px;color:#2a2f33;left:525.5px;transform-origin:0 50%;transform:scaleX(1.0000);">TG: Off</span>
<svg class="a" style="left:1239px;top:696px;" width="8" height="12" viewBox="0 0 8 12"><rect x="2.5" y="0.5" width="3" height="2" fill="#2a6a2a"/><rect x="1" y="2" width="6" height="9.5" rx="0.8" fill="#2f8a38" stroke="#1c4a20" stroke-width="0.8"/><rect x="2.3" y="3.5" width="3.4" height="3" fill="#dff0df"/></svg>
<svg class="a" style="left:1264px;top:697px;" width="11" height="11" viewBox="0 0 11 11"><path d="M1 10 C1 3 5 0.8 10 1 C10 6 7 10 1 10 Z" fill="#4aa83a"/><path d="M1 10 L8 3" stroke="#e8f8e0" stroke-width="0.8"/></svg>
<div class="a" style="left:1278.6px;top:0px;width:1.4px;height:720px;background:#0c1218;"></div>
</div></body></html>
